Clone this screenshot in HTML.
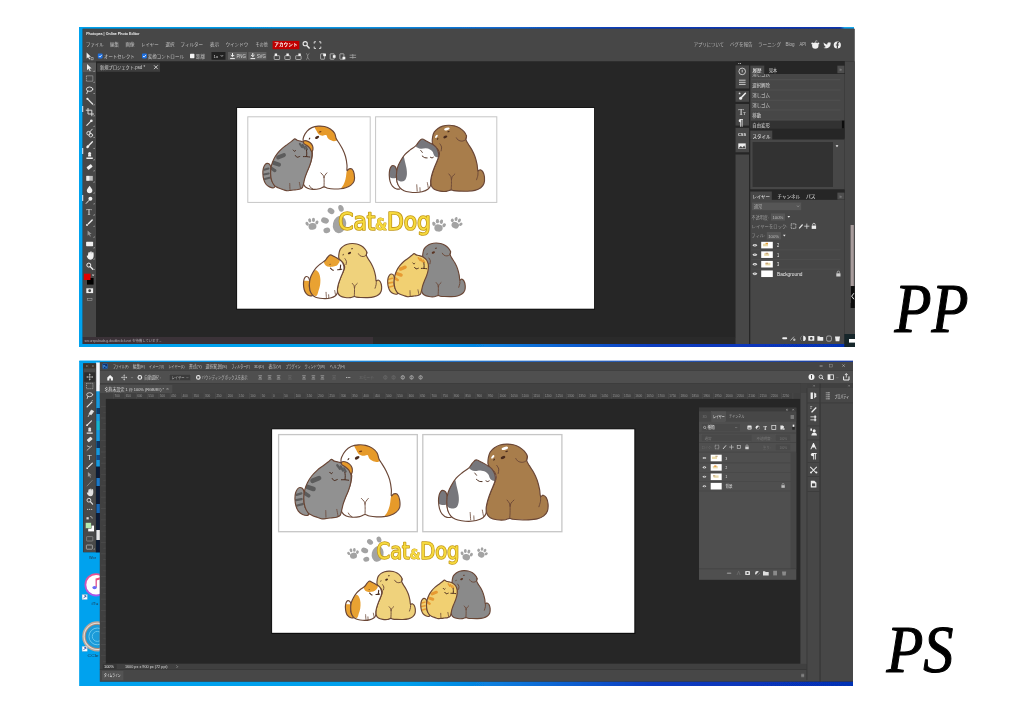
<!DOCTYPE html>
<html lang="ja"><head><meta charset="utf-8"><title>PP / PS</title>
<style>html,body{margin:0;padding:0;background:#fff;width:1024px;height:709px;overflow:hidden}svg{display:block}text{white-space:pre}</style>
</head><body>
<svg width="1024" height="709" viewBox="0 0 1024 709" font-family="'Liberation Sans','Noto Sans CJK JP',sans-serif">
<defs>
<g id="pairA"><clipPath id="adb"><path d="M47.09 11.11C48.47 9.56 50 8.45 51.85 7.62C53.7 6.79 56.08 6.31 58.2 6.14C60.32 5.96 62.52 6.08 64.55 6.56C66.58 7.04 68.69 7.88 70.37 8.99C72.05 10.11 73.63 11.64 74.6 13.23C75.57 14.81 75.49 16.93 76.19 18.52C76.9 20.11 77.78 20.99 78.84 22.75C79.89 24.51 81.43 26.81 82.54 29.1C83.65 31.39 84.76 33.86 85.5 36.51C86.24 39.15 86.74 42.63 86.98 44.97C87.23 47.32 86.63 49.93 86.98 50.58C87.34 51.23 88.25 49.12 89.1 48.89C89.95 48.66 91.22 48.36 92.06 49.21C92.91 50.05 93.83 52.03 94.18 53.97C94.53 55.91 94.71 58.99 94.18 60.85C93.65 62.7 92.42 63.93 91.01 65.08C89.59 66.23 87.48 67.11 85.71 67.72C83.95 68.34 82.36 68.57 80.42 68.78C78.48 68.99 76.19 69.08 74.07 68.99C71.96 68.91 69.4 68.61 67.72 68.25C66.05 67.9 65.43 66.79 64.02 66.88C62.61 66.97 61.11 68.38 59.26 68.78C57.41 69.19 54.85 69.4 52.91 69.31C50.97 69.22 49.12 68.96 47.62 68.25C46.12 67.55 44.62 66.23 43.92 65.08C43.21 63.93 43.12 63.05 43.39 61.38C43.65 59.7 44.62 57.32 45.5 55.03C46.38 52.73 47.71 50.09 48.68 47.62C49.65 45.15 50.71 42.68 51.32 40.21C51.94 37.74 52.65 35.1 52.38 32.8C52.12 30.51 50.97 28.13 49.74 26.46C48.5 24.78 46.07 23.63 44.97 22.75C43.88 21.87 43.4 22.13 43.17 21.16C42.95 20.19 42.95 18.61 43.6 16.93C44.25 15.26 45.71 12.66 47.09 11.11Z"/></clipPath><path d="M47.09 11.11C48.47 9.56 50 8.45 51.85 7.62C53.7 6.79 56.08 6.31 58.2 6.14C60.32 5.96 62.52 6.08 64.55 6.56C66.58 7.04 68.69 7.88 70.37 8.99C72.05 10.11 73.63 11.64 74.6 13.23C75.57 14.81 75.49 16.93 76.19 18.52C76.9 20.11 77.78 20.99 78.84 22.75C79.89 24.51 81.43 26.81 82.54 29.1C83.65 31.39 84.76 33.86 85.5 36.51C86.24 39.15 86.74 42.63 86.98 44.97C87.23 47.32 86.63 49.93 86.98 50.58C87.34 51.23 88.25 49.12 89.1 48.89C89.95 48.66 91.22 48.36 92.06 49.21C92.91 50.05 93.83 52.03 94.18 53.97C94.53 55.91 94.71 58.99 94.18 60.85C93.65 62.7 92.42 63.93 91.01 65.08C89.59 66.23 87.48 67.11 85.71 67.72C83.95 68.34 82.36 68.57 80.42 68.78C78.48 68.99 76.19 69.08 74.07 68.99C71.96 68.91 69.4 68.61 67.72 68.25C66.05 67.9 65.43 66.79 64.02 66.88C62.61 66.97 61.11 68.38 59.26 68.78C57.41 69.19 54.85 69.4 52.91 69.31C50.97 69.22 49.12 68.96 47.62 68.25C46.12 67.55 44.62 66.23 43.92 65.08C43.21 63.93 43.12 63.05 43.39 61.38C43.65 59.7 44.62 57.32 45.5 55.03C46.38 52.73 47.71 50.09 48.68 47.62C49.65 45.15 50.71 42.68 51.32 40.21C51.94 37.74 52.65 35.1 52.38 32.8C52.12 30.51 50.97 28.13 49.74 26.46C48.5 24.78 46.07 23.63 44.97 22.75C43.88 21.87 43.4 22.13 43.17 21.16C42.95 20.19 42.95 18.61 43.6 16.93C44.25 15.26 45.71 12.66 47.09 11.11Z" fill="#fff"/><g clip-path="url(#adb)"><path d="M54.5 5.82C55.2 4.76 58.64 4.76 60.85 4.76C63.05 4.76 65.52 5.03 67.72 5.82C69.93 6.61 72.49 8.02 74.07 9.52C75.66 11.02 76.63 13.14 77.25 14.81C77.87 16.49 78.31 18.52 77.78 19.58C77.25 20.63 75.31 21.08 74.07 21.16C72.84 21.25 71.43 20.63 70.37 20.11C69.31 19.58 68.43 18.84 67.72 17.99C67.02 17.14 67.02 15.41 66.14 15.03C65.26 14.64 63.67 15.78 62.43 15.66C61.2 15.54 59.7 15.04 58.73 14.29C57.76 13.53 57.32 12.52 56.61 11.11C55.91 9.7 53.79 6.88 54.5 5.82Z" fill="#e69a2c"/><path d="M86.98 50.58C87.46 49.65 88.25 49.12 89.1 48.89C89.95 48.66 91.22 48.36 92.06 49.21C92.91 50.05 93.83 52.03 94.18 53.97C94.53 55.91 94.71 58.99 94.18 60.85C93.65 62.7 92.42 63.93 91.01 65.08C89.59 66.23 87.39 67.07 85.71 67.72C84.04 68.38 81.31 69.52 80.95 68.99C80.6 68.47 82.84 66.17 83.6 64.55C84.36 62.93 85.06 60.93 85.5 59.26C85.94 57.58 86 55.94 86.24 54.5C86.49 53.05 86.51 51.52 86.98 50.58Z" fill="#e69a2c"/></g><path d="M47.09 11.11C48.47 9.56 50 8.45 51.85 7.62C53.7 6.79 56.08 6.31 58.2 6.14C60.32 5.96 62.52 6.08 64.55 6.56C66.58 7.04 68.69 7.88 70.37 8.99C72.05 10.11 73.63 11.64 74.6 13.23C75.57 14.81 75.49 16.93 76.19 18.52C76.9 20.11 77.78 20.99 78.84 22.75C79.89 24.51 81.43 26.81 82.54 29.1C83.65 31.39 84.76 33.86 85.5 36.51C86.24 39.15 86.74 42.63 86.98 44.97C87.23 47.32 86.63 49.93 86.98 50.58C87.34 51.23 88.25 49.12 89.1 48.89C89.95 48.66 91.22 48.36 92.06 49.21C92.91 50.05 93.83 52.03 94.18 53.97C94.53 55.91 94.71 58.99 94.18 60.85C93.65 62.7 92.42 63.93 91.01 65.08C89.59 66.23 87.48 67.11 85.71 67.72C83.95 68.34 82.36 68.57 80.42 68.78C78.48 68.99 76.19 69.08 74.07 68.99C71.96 68.91 69.4 68.61 67.72 68.25C66.05 67.9 65.43 66.79 64.02 66.88C62.61 66.97 61.11 68.38 59.26 68.78C57.41 69.19 54.85 69.4 52.91 69.31C50.97 69.22 49.12 68.96 47.62 68.25C46.12 67.55 44.62 66.23 43.92 65.08C43.21 63.93 43.12 63.05 43.39 61.38C43.65 59.7 44.62 57.32 45.5 55.03C46.38 52.73 47.71 50.09 48.68 47.62C49.65 45.15 50.71 42.68 51.32 40.21C51.94 37.74 52.65 35.1 52.38 32.8C52.12 30.51 50.97 28.13 49.74 26.46C48.5 24.78 46.07 23.63 44.97 22.75C43.88 21.87 43.4 22.13 43.17 21.16C42.95 20.19 42.95 18.61 43.6 16.93C44.25 15.26 45.71 12.66 47.09 11.11Z" fill="none" stroke="#6a4636" stroke-width="1.15" stroke-linejoin="round" vector-effect="non-scaling-stroke"/><path d="M60.85 52.91C61.25 53.35 62.75 54.71 63.28 55.56C63.81 56.4 63.77 57.99 64.02 57.99C64.27 57.99 64.29 56.4 64.76 55.56C65.24 54.71 66.53 53.35 66.88 52.91" fill="none" stroke="#6a4636" stroke-width="0.9" stroke-linecap="round" stroke-linejoin="round" vector-effect="non-scaling-stroke"/><path d="M64.02 57.99C64.04 58.73 64.13 60.99 64.13 62.43C64.13 63.88 64.04 65.96 64.02 66.67" fill="none" stroke="#6a4636" stroke-width="0.9" stroke-linecap="round" stroke-linejoin="round" vector-effect="non-scaling-stroke"/><path d="M49.52 65.61C49.74 65.96 50.26 67.2 50.79 67.72C51.32 68.25 52.38 68.61 52.7 68.78" fill="none" stroke="#6a4636" stroke-width="0.9" stroke-linecap="round" stroke-linejoin="round" vector-effect="non-scaling-stroke"/><ellipse cx="57.14" cy="17.46" rx="2.22" ry="1.27" transform="rotate(-30 57.14 17.46)" fill="#4a2c1e"/><ellipse cx="49.52" cy="18.62" rx="1.16" ry="0.53" transform="rotate(-55 49.52 18.62)" fill="#4a2c1e"/><ellipse cx="60.11" cy="11.85" rx="1.48" ry="0.63" transform="rotate(-15 60.11 11.85)" fill="#7a3e14"/><g><clipPath id="act"><path d="M7.41 43.39C8.24 43.44 9.44 43.92 10.05 44.97C10.67 46.03 11.02 48.06 11.11 49.74C11.2 51.41 10.49 53.26 10.58 55.03C10.67 56.79 10.93 58.55 11.64 60.32C12.35 62.08 14.46 64.37 14.81 65.61C15.17 66.84 14.64 67.51 13.76 67.72C12.87 67.94 10.85 67.5 9.52 66.88C8.2 66.26 6.79 65.29 5.82 64.02C4.85 62.75 4.2 61.02 3.7 59.26C3.21 57.5 2.91 55.29 2.86 53.44C2.8 51.59 3.02 49.61 3.39 48.15C3.76 46.68 4.41 45.45 5.08 44.66C5.75 43.86 6.58 43.33 7.41 43.39Z"/></clipPath><clipPath id="acb"><path d="M34.71 18.84C35.63 18.69 36.24 19.93 37.25 20.32C38.25 20.71 39.37 20.76 40.74 21.16C42.12 21.57 44 21.87 45.5 22.75C47 23.63 48.68 24.87 49.74 26.46C50.79 28.04 51.55 30.16 51.85 32.28C52.15 34.39 51.89 36.95 51.53 39.15C51.18 41.36 50.48 43.39 49.74 45.5C48.99 47.62 47.88 49.82 47.09 51.85C46.3 53.88 45.56 55.73 44.97 57.67C44.39 59.61 44.04 61.82 43.6 63.49C43.16 65.17 43.07 66.75 42.33 67.72C41.59 68.69 40.39 68.96 39.15 69.31C37.92 69.66 36.33 69.66 34.92 69.84C33.51 70.02 32.1 70.23 30.69 70.37C29.28 70.51 27.87 70.86 26.46 70.69C25.04 70.51 23.63 69.81 22.22 69.31C20.81 68.82 19.31 68.38 17.99 67.72C16.67 67.07 15.34 66.63 14.29 65.4C13.23 64.16 12.26 62.4 11.64 60.32C11.02 58.24 10.62 55.38 10.58 52.91C10.55 50.44 10.9 47.8 11.43 45.5C11.96 43.21 12.75 41.18 13.76 39.15C14.76 37.13 16.05 35.13 17.46 33.33C18.87 31.53 20.55 29.86 22.22 28.36C23.9 26.86 25.93 25.54 27.51 24.34C29.1 23.14 30.55 22.08 31.75 21.16C32.95 20.25 33.79 18.98 34.71 18.84Z"/></clipPath><path d="M7.41 43.39C8.24 43.44 9.44 43.92 10.05 44.97C10.67 46.03 11.02 48.06 11.11 49.74C11.2 51.41 10.49 53.26 10.58 55.03C10.67 56.79 10.93 58.55 11.64 60.32C12.35 62.08 14.46 64.37 14.81 65.61C15.17 66.84 14.64 67.51 13.76 67.72C12.87 67.94 10.85 67.5 9.52 66.88C8.2 66.26 6.79 65.29 5.82 64.02C4.85 62.75 4.2 61.02 3.7 59.26C3.21 57.5 2.91 55.29 2.86 53.44C2.8 51.59 3.02 49.61 3.39 48.15C3.76 46.68 4.41 45.45 5.08 44.66C5.75 43.86 6.58 43.33 7.41 43.39Z" fill="#919191"/><g clip-path="url(#act)"><path d="M4.23 49.74L8.47 48.47" stroke="#5c5c5c" stroke-width="2.01" stroke-linecap="round" fill="none"/><path d="M3.81 54.39L8.68 53.44" stroke="#5c5c5c" stroke-width="2.01" stroke-linecap="round" fill="none"/><path d="M4.87 59.05L9.52 57.78" stroke="#5c5c5c" stroke-width="2.01" stroke-linecap="round" fill="none"/></g><path d="M7.41 43.39C8.24 43.44 9.44 43.92 10.05 44.97C10.67 46.03 11.02 48.06 11.11 49.74C11.2 51.41 10.49 53.26 10.58 55.03C10.67 56.79 10.93 58.55 11.64 60.32C12.35 62.08 14.46 64.37 14.81 65.61C15.17 66.84 14.64 67.51 13.76 67.72C12.87 67.94 10.85 67.5 9.52 66.88C8.2 66.26 6.79 65.29 5.82 64.02C4.85 62.75 4.2 61.02 3.7 59.26C3.21 57.5 2.91 55.29 2.86 53.44C2.8 51.59 3.02 49.61 3.39 48.15C3.76 46.68 4.41 45.45 5.08 44.66C5.75 43.86 6.58 43.33 7.41 43.39Z" fill="none" stroke="#6a4636" stroke-width="1.15" vector-effect="non-scaling-stroke"/><path d="M34.71 18.84C35.63 18.69 36.24 19.93 37.25 20.32C38.25 20.71 39.37 20.76 40.74 21.16C42.12 21.57 44 21.87 45.5 22.75C47 23.63 48.68 24.87 49.74 26.46C50.79 28.04 51.55 30.16 51.85 32.28C52.15 34.39 51.89 36.95 51.53 39.15C51.18 41.36 50.48 43.39 49.74 45.5C48.99 47.62 47.88 49.82 47.09 51.85C46.3 53.88 45.56 55.73 44.97 57.67C44.39 59.61 44.04 61.82 43.6 63.49C43.16 65.17 43.07 66.75 42.33 67.72C41.59 68.69 40.39 68.96 39.15 69.31C37.92 69.66 36.33 69.66 34.92 69.84C33.51 70.02 32.1 70.23 30.69 70.37C29.28 70.51 27.87 70.86 26.46 70.69C25.04 70.51 23.63 69.81 22.22 69.31C20.81 68.82 19.31 68.38 17.99 67.72C16.67 67.07 15.34 66.63 14.29 65.4C13.23 64.16 12.26 62.4 11.64 60.32C11.02 58.24 10.62 55.38 10.58 52.91C10.55 50.44 10.9 47.8 11.43 45.5C11.96 43.21 12.75 41.18 13.76 39.15C14.76 37.13 16.05 35.13 17.46 33.33C18.87 31.53 20.55 29.86 22.22 28.36C23.9 26.86 25.93 25.54 27.51 24.34C29.1 23.14 30.55 22.08 31.75 21.16C32.95 20.25 33.79 18.98 34.71 18.84Z" fill="#919191"/><g clip-path="url(#acb)"><path d="M18.2 37.46L23.92 35.13" stroke="#5c5c5c" stroke-width="4.02" stroke-linecap="round" fill="none"/><path d="M13.54 42.75L19.05 44.66" stroke="#5c5c5c" stroke-width="4.02" stroke-linecap="round" fill="none"/><path d="M11.01 48.04L14.81 50.58" stroke="#5c5c5c" stroke-width="3.17" stroke-linecap="round" fill="none"/><path d="M39.79 23.92L42.12 27.09" stroke="#5c5c5c" stroke-width="2.01" stroke-linecap="round" fill="none"/><path d="M42.75 24.97L44.87 28.57" stroke="#5c5c5c" stroke-width="2.01" stroke-linecap="round" fill="none"/><path d="M45.71 26.46L47.2 29.42" stroke="#5c5c5c" stroke-width="1.69" stroke-linecap="round" fill="none"/></g><path d="M34.71 18.84C35.63 18.69 36.24 19.93 37.25 20.32C38.25 20.71 39.37 20.76 40.74 21.16C42.12 21.57 44 21.87 45.5 22.75C47 23.63 48.68 24.87 49.74 26.46C50.79 28.04 51.55 30.16 51.85 32.28C52.15 34.39 51.89 36.95 51.53 39.15C51.18 41.36 50.48 43.39 49.74 45.5C48.99 47.62 47.88 49.82 47.09 51.85C46.3 53.88 45.56 55.73 44.97 57.67C44.39 59.61 44.04 61.82 43.6 63.49C43.16 65.17 43.07 66.75 42.33 67.72C41.59 68.69 40.39 68.96 39.15 69.31C37.92 69.66 36.33 69.66 34.92 69.84C33.51 70.02 32.1 70.23 30.69 70.37C29.28 70.51 27.87 70.86 26.46 70.69C25.04 70.51 23.63 69.81 22.22 69.31C20.81 68.82 19.31 68.38 17.99 67.72C16.67 67.07 15.34 66.63 14.29 65.4C13.23 64.16 12.26 62.4 11.64 60.32C11.02 58.24 10.62 55.38 10.58 52.91C10.55 50.44 10.9 47.8 11.43 45.5C11.96 43.21 12.75 41.18 13.76 39.15C14.76 37.13 16.05 35.13 17.46 33.33C18.87 31.53 20.55 29.86 22.22 28.36C23.9 26.86 25.93 25.54 27.51 24.34C29.1 23.14 30.55 22.08 31.75 21.16C32.95 20.25 33.79 18.98 34.71 18.84Z" fill="none" stroke="#6a4636" stroke-width="1.15" stroke-linejoin="round" vector-effect="non-scaling-stroke"/><path d="M33.23 30.05C33.44 30.26 34.11 31.25 34.5 31.32C34.89 31.39 35.38 30.62 35.56 30.48" fill="none" stroke="#4a2c1e" stroke-width="1" stroke-linecap="round" stroke-linejoin="round" vector-effect="non-scaling-stroke"/><path d="M35.34 35.34C35.63 35.66 36.3 37.07 37.04 37.25C37.78 37.43 39.33 36.54 39.79 36.4" fill="none" stroke="#4a2c1e" stroke-width="1" stroke-linecap="round" stroke-linejoin="round" vector-effect="non-scaling-stroke"/><path d="M46.35 29.84C46.42 30.37 46.74 31.92 46.77 33.02C46.81 34.11 46.6 35.84 46.56 36.4" fill="none" stroke="#4a2c1e" stroke-width="1" stroke-linecap="round" stroke-linejoin="round" vector-effect="non-scaling-stroke"/><path d="M43.39 36.61C43.92 36.61 45.5 36.54 46.56 36.61C47.62 36.68 49.21 36.97 49.74 37.04" fill="none" stroke="#4a2c1e" stroke-width="1" stroke-linecap="round" stroke-linejoin="round" vector-effect="non-scaling-stroke"/><path d="M29.74 63.49C29.77 64.46 29.91 68.34 29.95 69.31" fill="none" stroke="#6a4636" stroke-width="0.8" stroke-linecap="round" stroke-linejoin="round" vector-effect="non-scaling-stroke"/><path d="M39.37 62.43C39.54 63.35 40.25 67.02 40.42 67.94" fill="none" stroke="#6a4636" stroke-width="0.8" stroke-linecap="round" stroke-linejoin="round" vector-effect="non-scaling-stroke"/></g><path d="M43.6 21.16C44.04 20.72 45.45 20.58 46.56 20.85C47.67 21.11 49.26 21.9 50.26 22.75C51.27 23.6 52.15 24.78 52.59 25.93C53.03 27.07 53.07 28.69 52.91 29.63C52.75 30.56 52.17 31.8 51.64 31.53C51.11 31.27 50.58 29.1 49.74 28.04C48.89 26.98 47.53 25.94 46.56 25.19C45.59 24.43 44.41 24.16 43.92 23.49C43.42 22.82 43.16 21.6 43.6 21.16Z" fill="#e69a2c" stroke="#6a4636" stroke-width="1.15" stroke-linejoin="round" vector-effect="non-scaling-stroke"/></g>
<g id="pairB"><path d="M47.62 16.93C47.94 15.17 48.32 13.58 49.21 12.17C50.09 10.76 51.5 9.47 52.91 8.47C54.32 7.46 55.91 6.67 57.67 6.14C59.44 5.61 61.55 5.34 63.49 5.29C65.43 5.24 67.46 5.38 69.31 5.82C71.16 6.26 73.02 7 74.6 7.94C76.19 8.87 77.69 10.11 78.84 11.43C79.98 12.75 81.13 14.51 81.48 15.87C81.83 17.23 80.69 18.25 80.95 19.58C81.22 20.9 82.1 22.13 83.07 23.81C84.04 25.49 85.63 27.51 86.77 29.63C87.92 31.75 89.07 34.04 89.95 36.51C90.83 38.98 91.57 42.1 92.06 44.44C92.56 46.79 92.38 49.7 92.91 50.58C93.44 51.46 94.41 49.52 95.24 49.74C96.07 49.95 97.18 50.62 97.88 51.85C98.59 53.09 99.29 55.2 99.47 57.14C99.65 59.08 99.56 61.73 98.94 63.49C98.32 65.26 97.27 66.58 95.77 67.72C94.27 68.87 92.15 69.79 89.95 70.37C87.74 70.95 85.19 71.09 82.54 71.22C79.89 71.34 76.37 71.2 74.07 71.11C71.78 71.02 70.11 70.9 68.78 70.69C67.46 70.48 67.37 69.74 66.14 69.84C64.9 69.95 63.23 71.11 61.38 71.32C59.52 71.53 57.05 71.45 55.03 71.11C53 70.78 50.67 70.23 49.21 69.31C47.74 68.4 46.83 67.11 46.24 65.61C45.66 64.11 45.57 62.26 45.71 60.32C45.86 58.38 46.42 56.26 47.09 53.97C47.76 51.68 48.77 49.03 49.74 46.56C50.71 44.09 52.12 41.27 52.91 39.15C53.7 37.04 54.5 35.45 54.5 33.86C54.5 32.28 53.79 30.95 52.91 29.63C52.03 28.31 50.14 27.07 49.21 25.93C48.27 24.78 47.57 24.25 47.3 22.75C47.04 21.25 47.3 18.69 47.62 16.93Z" fill="#a87d4c" stroke="#6a4636" stroke-width="1.15" stroke-linejoin="round" vector-effect="non-scaling-stroke"/><path d="M81.48 15.87C81.34 16.49 81.38 18.69 80.63 19.58C79.89 20.46 78.27 21.08 77.04 21.16C75.8 21.25 74.16 20.67 73.23 20.11C72.29 19.54 71.73 18.17 71.43 17.78" fill="none" stroke="#6a4636" stroke-width="0.9" stroke-linecap="round" stroke-linejoin="round" vector-effect="non-scaling-stroke"/><path d="M54.81 23.81C55.11 24.34 56.4 25.8 56.61 26.98C56.83 28.17 56.17 30.25 56.08 30.9" fill="none" stroke="#6a4636" stroke-width="0.9" stroke-linecap="round" stroke-linejoin="round" vector-effect="non-scaling-stroke"/><path d="M92.91 50.58C92.91 51.32 93.14 53.49 92.91 55.03C92.68 56.56 91.76 58.99 91.53 59.79" fill="none" stroke="#6a4636" stroke-width="0.9" stroke-linecap="round" stroke-linejoin="round" vector-effect="non-scaling-stroke"/><path d="M63.81 53.97C64.14 54.41 65.38 55.7 65.82 56.61C66.26 57.53 66.21 59.47 66.46 59.47C66.7 59.47 66.74 57.53 67.3 56.61C67.87 55.7 69.42 54.41 69.84 53.97" fill="none" stroke="#6a4636" stroke-width="0.9" stroke-linecap="round" stroke-linejoin="round" vector-effect="non-scaling-stroke"/><path d="M66.46 59.47C66.46 60.32 66.51 62.79 66.46 64.55C66.4 66.31 66.19 69.14 66.14 70.05" fill="none" stroke="#6a4636" stroke-width="0.9" stroke-linecap="round" stroke-linejoin="round" vector-effect="non-scaling-stroke"/><ellipse cx="61.9" cy="8.99" rx="2.86" ry="1.27" transform="rotate(-15 61.9 8.99)" fill="#fff"/><ellipse cx="51.43" cy="16.4" rx="1.8" ry="0.95" transform="rotate(-50 51.43 16.4)" fill="#fff"/><ellipse cx="60.32" cy="16.93" rx="2.12" ry="1.27" transform="rotate(-25 60.32 16.93)" fill="#4a2c1e"/><ellipse cx="63.49" cy="11.64" rx="1.27" ry="0.63" transform="rotate(-15 63.49 11.64)" fill="#4a2c1e"/><ellipse cx="52.59" cy="18.84" rx="1.06" ry="0.53" transform="rotate(-55 52.59 18.84)" fill="#4a2c1e"/><clipPath id="bct"><path d="M7.94 45.5C8.68 45.59 9.93 46.03 10.58 47.09C11.23 48.15 11.71 50.18 11.85 51.85C11.99 53.53 11.29 55.2 11.43 57.14C11.57 59.08 11.96 61.64 12.7 63.49C13.44 65.34 16.05 67.34 15.87 68.25C15.7 69.17 13.05 69.35 11.64 68.99C10.23 68.64 8.5 67.41 7.41 66.14C6.31 64.87 5.61 63.23 5.08 61.38C4.55 59.52 4.29 56.97 4.23 55.03C4.18 53.09 4.44 51.15 4.76 49.74C5.08 48.32 5.61 47.27 6.14 46.56C6.67 45.86 7.2 45.41 7.94 45.5Z"/></clipPath><clipPath id="bcb"><path d="M37.04 19.05C38.36 18.96 40.21 20.37 41.8 21.16C43.39 21.96 45.06 22.84 46.56 23.81C48.06 24.78 49.68 25.66 50.79 26.98C51.9 28.31 52.75 30.25 53.23 31.75C53.7 33.25 53.79 34.57 53.65 35.98C53.51 37.39 53.03 38.45 52.38 40.21C51.73 41.98 50.62 44.27 49.74 46.56C48.85 48.85 47.76 51.68 47.09 53.97C46.42 56.26 45.98 58.38 45.71 60.32C45.45 62.26 45.98 64.11 45.5 65.61C45.03 67.11 44.27 68.29 42.86 69.31C41.45 70.34 39.07 71.22 37.04 71.75C35.01 72.28 32.8 72.45 30.69 72.49C28.57 72.52 26.28 72.26 24.34 71.96C22.4 71.66 20.63 71.39 19.05 70.69C17.46 69.98 15.96 69.1 14.81 67.72C13.67 66.35 12.73 64.55 12.17 62.43C11.6 60.32 11.38 57.5 11.43 55.03C11.48 52.56 11.83 49.91 12.49 47.62C13.14 45.33 14.16 43.39 15.34 41.27C16.53 39.15 17.99 36.77 19.58 34.92C21.16 33.07 23.02 31.66 24.87 30.16C26.72 28.66 29.19 27.34 30.69 25.93C32.19 24.51 32.8 22.84 33.86 21.69C34.92 20.55 35.71 19.14 37.04 19.05Z"/></clipPath><path d="M7.94 45.5C8.68 45.59 9.93 46.03 10.58 47.09C11.23 48.15 11.71 50.18 11.85 51.85C11.99 53.53 11.29 55.2 11.43 57.14C11.57 59.08 11.96 61.64 12.7 63.49C13.44 65.34 16.05 67.34 15.87 68.25C15.7 69.17 13.05 69.35 11.64 68.99C10.23 68.64 8.5 67.41 7.41 66.14C6.31 64.87 5.61 63.23 5.08 61.38C4.55 59.52 4.29 56.97 4.23 55.03C4.18 53.09 4.44 51.15 4.76 49.74C5.08 48.32 5.61 47.27 6.14 46.56C6.67 45.86 7.2 45.41 7.94 45.5Z" fill="#fff"/><g clip-path="url(#bct)"><path d="M2.12 42.33C4.06 40.21 11.82 40.21 13.76 42.33C15.7 44.44 14.29 52.42 13.76 55.03C13.23 57.64 11.82 57.5 10.58 57.99C9.35 58.48 7.76 58.48 6.35 57.99C4.94 57.5 2.82 57.64 2.12 55.03C1.41 52.42 0.18 44.44 2.12 42.33Z" fill="#77777b"/></g><path d="M7.94 45.5C8.68 45.59 9.93 46.03 10.58 47.09C11.23 48.15 11.71 50.18 11.85 51.85C11.99 53.53 11.29 55.2 11.43 57.14C11.57 59.08 11.96 61.64 12.7 63.49C13.44 65.34 16.05 67.34 15.87 68.25C15.7 69.17 13.05 69.35 11.64 68.99C10.23 68.64 8.5 67.41 7.41 66.14C6.31 64.87 5.61 63.23 5.08 61.38C4.55 59.52 4.29 56.97 4.23 55.03C4.18 53.09 4.44 51.15 4.76 49.74C5.08 48.32 5.61 47.27 6.14 46.56C6.67 45.86 7.2 45.41 7.94 45.5Z" fill="none" stroke="#6a4636" stroke-width="1.15" vector-effect="non-scaling-stroke"/><path d="M37.04 19.05C38.36 18.96 40.21 20.37 41.8 21.16C43.39 21.96 45.06 22.84 46.56 23.81C48.06 24.78 49.68 25.66 50.79 26.98C51.9 28.31 52.75 30.25 53.23 31.75C53.7 33.25 53.79 34.57 53.65 35.98C53.51 37.39 53.03 38.45 52.38 40.21C51.73 41.98 50.62 44.27 49.74 46.56C48.85 48.85 47.76 51.68 47.09 53.97C46.42 56.26 45.98 58.38 45.71 60.32C45.45 62.26 45.98 64.11 45.5 65.61C45.03 67.11 44.27 68.29 42.86 69.31C41.45 70.34 39.07 71.22 37.04 71.75C35.01 72.28 32.8 72.45 30.69 72.49C28.57 72.52 26.28 72.26 24.34 71.96C22.4 71.66 20.63 71.39 19.05 70.69C17.46 69.98 15.96 69.1 14.81 67.72C13.67 66.35 12.73 64.55 12.17 62.43C11.6 60.32 11.38 57.5 11.43 55.03C11.48 52.56 11.83 49.91 12.49 47.62C13.14 45.33 14.16 43.39 15.34 41.27C16.53 39.15 17.99 36.77 19.58 34.92C21.16 33.07 23.02 31.66 24.87 30.16C26.72 28.66 29.19 27.34 30.69 25.93C32.19 24.51 32.8 22.84 33.86 21.69C34.92 20.55 35.71 19.14 37.04 19.05Z" fill="#fff"/><g clip-path="url(#bcb)"><path d="M31.22 25.93C31.83 24.34 34.74 19.17 36.51 18.2C38.27 17.23 40.04 19.35 41.8 20.11C43.56 20.86 45.41 21.69 47.09 22.75C48.77 23.81 50.62 24.96 51.85 26.46C53.09 27.95 54.06 30.07 54.5 31.75C54.94 33.42 54.94 35.59 54.5 36.51C54.06 37.43 52.73 37.43 51.85 37.25C50.97 37.07 49.91 36.37 49.21 35.45C48.5 34.53 48.32 32.75 47.62 31.75C46.91 30.74 46.12 29.98 44.97 29.42C43.83 28.85 42.24 28.47 40.74 28.36C39.24 28.25 37.3 28.89 35.98 28.78C34.66 28.68 33.6 28.2 32.8 27.72C32.01 27.25 30.6 27.51 31.22 25.93Z" fill="#77777b"/><path d="M15.87 40.21C16.93 38.8 17.81 36.16 18.52 36.51C19.22 36.86 19.58 40.12 20.11 42.33C20.63 44.53 21.43 47.44 21.69 49.74C21.96 52.03 22.05 54.29 21.69 56.08C21.34 57.88 20.72 59.68 19.58 60.53C18.43 61.38 16.31 61.64 14.81 61.16C13.32 60.69 11.38 59.4 10.58 57.67C9.79 55.94 9.79 52.91 10.05 50.79C10.32 48.68 11.2 46.74 12.17 44.97C13.14 43.21 14.81 41.62 15.87 40.21Z" fill="#77777b"/></g><path d="M37.04 19.05C38.36 18.96 40.21 20.37 41.8 21.16C43.39 21.96 45.06 22.84 46.56 23.81C48.06 24.78 49.68 25.66 50.79 26.98C51.9 28.31 52.75 30.25 53.23 31.75C53.7 33.25 53.79 34.57 53.65 35.98C53.51 37.39 53.03 38.45 52.38 40.21C51.73 41.98 50.62 44.27 49.74 46.56C48.85 48.85 47.76 51.68 47.09 53.97C46.42 56.26 45.98 58.38 45.71 60.32C45.45 62.26 45.98 64.11 45.5 65.61C45.03 67.11 44.27 68.29 42.86 69.31C41.45 70.34 39.07 71.22 37.04 71.75C35.01 72.28 32.8 72.45 30.69 72.49C28.57 72.52 26.28 72.26 24.34 71.96C22.4 71.66 20.63 71.39 19.05 70.69C17.46 69.98 15.96 69.1 14.81 67.72C13.67 66.35 12.73 64.55 12.17 62.43C11.6 60.32 11.38 57.5 11.43 55.03C11.48 52.56 11.83 49.91 12.49 47.62C13.14 45.33 14.16 43.39 15.34 41.27C16.53 39.15 17.99 36.77 19.58 34.92C21.16 33.07 23.02 31.66 24.87 30.16C26.72 28.66 29.19 27.34 30.69 25.93C32.19 24.51 32.8 22.84 33.86 21.69C34.92 20.55 35.71 19.14 37.04 19.05Z" fill="none" stroke="#6a4636" stroke-width="1.15" stroke-linejoin="round" vector-effect="non-scaling-stroke"/><path d="M31.75 64.76C31.82 65.82 32.1 70.05 32.17 71.11" fill="none" stroke="#6a4636" stroke-width="0.8" stroke-linecap="round" stroke-linejoin="round" vector-effect="non-scaling-stroke"/><path d="M42.33 62.65C42.5 63.58 43.21 67.32 43.39 68.25" fill="none" stroke="#6a4636" stroke-width="0.8" stroke-linecap="round" stroke-linejoin="round" vector-effect="non-scaling-stroke"/><path d="M34.92 67.72C34.96 68.36 35.1 70.9 35.13 71.53" fill="none" stroke="#6a4636" stroke-width="0.8" stroke-linecap="round" stroke-linejoin="round" vector-effect="non-scaling-stroke"/><path d="M35.77 30.48C35.91 30.65 36.37 31.22 36.61 31.53C36.86 31.85 37.14 32.24 37.25 32.38" fill="none" stroke="#4a2c1e" stroke-width="1" stroke-linecap="round" stroke-linejoin="round" vector-effect="non-scaling-stroke"/><path d="M37.25 35.98C37.65 36.26 38.87 37.35 39.68 37.67C40.49 37.99 41.71 37.85 42.12 37.88" fill="none" stroke="#4a2c1e" stroke-width="1" stroke-linecap="round" stroke-linejoin="round" vector-effect="non-scaling-stroke"/><path d="M45.5 37.25C45.75 37.35 46.53 37.88 46.98 37.88C47.44 37.88 48.04 37.35 48.25 37.25" fill="none" stroke="#4a2c1e" stroke-width="1" stroke-linecap="round" stroke-linejoin="round" vector-effect="non-scaling-stroke"/></g>
<g id="pairC"><path d="M47.62 16.93C47.94 15.17 48.32 13.58 49.21 12.17C50.09 10.76 51.5 9.47 52.91 8.47C54.32 7.46 55.91 6.67 57.67 6.14C59.44 5.61 61.55 5.34 63.49 5.29C65.43 5.24 67.46 5.38 69.31 5.82C71.16 6.26 73.02 7 74.6 7.94C76.19 8.87 77.69 10.11 78.84 11.43C79.98 12.75 81.13 14.51 81.48 15.87C81.83 17.23 80.69 18.25 80.95 19.58C81.22 20.9 82.1 22.13 83.07 23.81C84.04 25.49 85.63 27.51 86.77 29.63C87.92 31.75 89.07 34.04 89.95 36.51C90.83 38.98 91.57 42.1 92.06 44.44C92.56 46.79 92.38 49.7 92.91 50.58C93.44 51.46 94.41 49.52 95.24 49.74C96.07 49.95 97.18 50.62 97.88 51.85C98.59 53.09 99.29 55.2 99.47 57.14C99.65 59.08 99.56 61.73 98.94 63.49C98.32 65.26 97.27 66.58 95.77 67.72C94.27 68.87 92.15 69.79 89.95 70.37C87.74 70.95 85.19 71.09 82.54 71.22C79.89 71.34 76.37 71.2 74.07 71.11C71.78 71.02 70.11 70.9 68.78 70.69C67.46 70.48 67.37 69.74 66.14 69.84C64.9 69.95 63.23 71.11 61.38 71.32C59.52 71.53 57.05 71.45 55.03 71.11C53 70.78 50.67 70.23 49.21 69.31C47.74 68.4 46.83 67.11 46.24 65.61C45.66 64.11 45.57 62.26 45.71 60.32C45.86 58.38 46.42 56.26 47.09 53.97C47.76 51.68 48.77 49.03 49.74 46.56C50.71 44.09 52.12 41.27 52.91 39.15C53.7 37.04 54.5 35.45 54.5 33.86C54.5 32.28 53.79 30.95 52.91 29.63C52.03 28.31 50.14 27.07 49.21 25.93C48.27 24.78 47.57 24.25 47.3 22.75C47.04 21.25 47.3 18.69 47.62 16.93Z" fill="#efd27c" stroke="#6a4636" stroke-width="1.15" stroke-linejoin="round" vector-effect="non-scaling-stroke"/><path d="M81.48 15.87C81.34 16.49 81.38 18.69 80.63 19.58C79.89 20.46 78.27 21.08 77.04 21.16C75.8 21.25 74.16 20.67 73.23 20.11C72.29 19.54 71.73 18.17 71.43 17.78" fill="none" stroke="#6a4636" stroke-width="0.9" stroke-linecap="round" stroke-linejoin="round" vector-effect="non-scaling-stroke"/><path d="M54.81 23.81C55.11 24.34 56.4 25.8 56.61 26.98C56.83 28.17 56.17 30.25 56.08 30.9" fill="none" stroke="#6a4636" stroke-width="0.9" stroke-linecap="round" stroke-linejoin="round" vector-effect="non-scaling-stroke"/><path d="M92.91 50.58C92.91 51.32 93.14 53.49 92.91 55.03C92.68 56.56 91.76 58.99 91.53 59.79" fill="none" stroke="#6a4636" stroke-width="0.9" stroke-linecap="round" stroke-linejoin="round" vector-effect="non-scaling-stroke"/><path d="M63.81 53.97C64.14 54.41 65.38 55.7 65.82 56.61C66.26 57.53 66.21 59.47 66.46 59.47C66.7 59.47 66.74 57.53 67.3 56.61C67.87 55.7 69.42 54.41 69.84 53.97" fill="none" stroke="#6a4636" stroke-width="0.9" stroke-linecap="round" stroke-linejoin="round" vector-effect="non-scaling-stroke"/><path d="M66.46 59.47C66.46 60.32 66.51 62.79 66.46 64.55C66.4 66.31 66.19 69.14 66.14 70.05" fill="none" stroke="#6a4636" stroke-width="0.9" stroke-linecap="round" stroke-linejoin="round" vector-effect="non-scaling-stroke"/><ellipse cx="60.32" cy="16.93" rx="2.12" ry="1.27" transform="rotate(-25 60.32 16.93)" fill="#4a2c1e"/><ellipse cx="63.49" cy="11.64" rx="1.27" ry="0.63" transform="rotate(-15 63.49 11.64)" fill="#4a2c1e"/><ellipse cx="52.59" cy="18.84" rx="1.06" ry="0.53" transform="rotate(-55 52.59 18.84)" fill="#4a2c1e"/><clipPath id="cct"><path d="M7.94 45.5C8.68 45.59 9.93 46.03 10.58 47.09C11.23 48.15 11.71 50.18 11.85 51.85C11.99 53.53 11.29 55.2 11.43 57.14C11.57 59.08 11.96 61.64 12.7 63.49C13.44 65.34 16.05 67.34 15.87 68.25C15.7 69.17 13.05 69.35 11.64 68.99C10.23 68.64 8.5 67.41 7.41 66.14C6.31 64.87 5.61 63.23 5.08 61.38C4.55 59.52 4.29 56.97 4.23 55.03C4.18 53.09 4.44 51.15 4.76 49.74C5.08 48.32 5.61 47.27 6.14 46.56C6.67 45.86 7.2 45.41 7.94 45.5Z"/></clipPath><clipPath id="ccb"><path d="M37.04 19.05C38.36 18.96 40.21 20.37 41.8 21.16C43.39 21.96 45.06 22.84 46.56 23.81C48.06 24.78 49.68 25.66 50.79 26.98C51.9 28.31 52.75 30.25 53.23 31.75C53.7 33.25 53.79 34.57 53.65 35.98C53.51 37.39 53.03 38.45 52.38 40.21C51.73 41.98 50.62 44.27 49.74 46.56C48.85 48.85 47.76 51.68 47.09 53.97C46.42 56.26 45.98 58.38 45.71 60.32C45.45 62.26 45.98 64.11 45.5 65.61C45.03 67.11 44.27 68.29 42.86 69.31C41.45 70.34 39.07 71.22 37.04 71.75C35.01 72.28 32.8 72.45 30.69 72.49C28.57 72.52 26.28 72.26 24.34 71.96C22.4 71.66 20.63 71.39 19.05 70.69C17.46 69.98 15.96 69.1 14.81 67.72C13.67 66.35 12.73 64.55 12.17 62.43C11.6 60.32 11.38 57.5 11.43 55.03C11.48 52.56 11.83 49.91 12.49 47.62C13.14 45.33 14.16 43.39 15.34 41.27C16.53 39.15 17.99 36.77 19.58 34.92C21.16 33.07 23.02 31.66 24.87 30.16C26.72 28.66 29.19 27.34 30.69 25.93C32.19 24.51 32.8 22.84 33.86 21.69C34.92 20.55 35.71 19.14 37.04 19.05Z"/></clipPath><path d="M7.94 45.5C8.68 45.59 9.93 46.03 10.58 47.09C11.23 48.15 11.71 50.18 11.85 51.85C11.99 53.53 11.29 55.2 11.43 57.14C11.57 59.08 11.96 61.64 12.7 63.49C13.44 65.34 16.05 67.34 15.87 68.25C15.7 69.17 13.05 69.35 11.64 68.99C10.23 68.64 8.5 67.41 7.41 66.14C6.31 64.87 5.61 63.23 5.08 61.38C4.55 59.52 4.29 56.97 4.23 55.03C4.18 53.09 4.44 51.15 4.76 49.74C5.08 48.32 5.61 47.27 6.14 46.56C6.67 45.86 7.2 45.41 7.94 45.5Z" fill="#fff"/><g clip-path="url(#cct)"><path d="M2.31 52.14C3.36 50.06 6.92 50.54 8.64 50.64C10.37 50.73 11.62 50.64 12.68 52.71C13.74 54.79 13.83 59.82 14.98 63.09C16.14 66.35 20.94 70.77 19.6 72.31C18.25 73.84 9.8 73.84 6.92 72.31C4.03 70.77 3.07 66.45 2.31 63.09C1.54 59.72 1.25 54.21 2.31 52.14Z" fill="#e9a233"/></g><path d="M7.94 45.5C8.68 45.59 9.93 46.03 10.58 47.09C11.23 48.15 11.71 50.18 11.85 51.85C11.99 53.53 11.29 55.2 11.43 57.14C11.57 59.08 11.96 61.64 12.7 63.49C13.44 65.34 16.05 67.34 15.87 68.25C15.7 69.17 13.05 69.35 11.64 68.99C10.23 68.64 8.5 67.41 7.41 66.14C6.31 64.87 5.61 63.23 5.08 61.38C4.55 59.52 4.29 56.97 4.23 55.03C4.18 53.09 4.44 51.15 4.76 49.74C5.08 48.32 5.61 47.27 6.14 46.56C6.67 45.86 7.2 45.41 7.94 45.5Z" fill="none" stroke="#6a4636" stroke-width="1.15" vector-effect="non-scaling-stroke"/><path d="M37.04 19.05C38.36 18.96 40.21 20.37 41.8 21.16C43.39 21.96 45.06 22.84 46.56 23.81C48.06 24.78 49.68 25.66 50.79 26.98C51.9 28.31 52.75 30.25 53.23 31.75C53.7 33.25 53.79 34.57 53.65 35.98C53.51 37.39 53.03 38.45 52.38 40.21C51.73 41.98 50.62 44.27 49.74 46.56C48.85 48.85 47.76 51.68 47.09 53.97C46.42 56.26 45.98 58.38 45.71 60.32C45.45 62.26 45.98 64.11 45.5 65.61C45.03 67.11 44.27 68.29 42.86 69.31C41.45 70.34 39.07 71.22 37.04 71.75C35.01 72.28 32.8 72.45 30.69 72.49C28.57 72.52 26.28 72.26 24.34 71.96C22.4 71.66 20.63 71.39 19.05 70.69C17.46 69.98 15.96 69.1 14.81 67.72C13.67 66.35 12.73 64.55 12.17 62.43C11.6 60.32 11.38 57.5 11.43 55.03C11.48 52.56 11.83 49.91 12.49 47.62C13.14 45.33 14.16 43.39 15.34 41.27C16.53 39.15 17.99 36.77 19.58 34.92C21.16 33.07 23.02 31.66 24.87 30.16C26.72 28.66 29.19 27.34 30.69 25.93C32.19 24.51 32.8 22.84 33.86 21.69C34.92 20.55 35.71 19.14 37.04 19.05Z" fill="#fff"/><g clip-path="url(#ccb)"><path d="M30.2 25.97C31.04 24.28 32.75 19.48 34.35 18.36C35.94 17.25 37.9 18.65 39.77 19.28C41.63 19.92 44.09 21.01 45.53 22.17C46.97 23.32 48.32 24.76 48.41 26.2C48.51 27.64 47.16 29.66 46.11 30.81C45.05 31.96 43.8 32.64 42.07 33.12C40.34 33.6 37.52 33.88 35.73 33.69C33.95 33.5 32.43 32.83 31.35 31.96C30.28 31.1 29.47 29.5 29.28 28.51C29.09 27.51 29.35 27.66 30.2 25.97Z" fill="#e9a233"/><path d="M19.6 37.73C20.65 37.92 22.19 39.46 23.05 41.18C23.92 42.91 24.55 45.6 24.78 48.1C25.01 50.6 24.82 53.67 24.44 56.17C24.05 58.67 23.19 60.97 22.48 63.09C21.77 65.2 21.42 68.08 20.17 68.85C18.92 69.62 16.43 68.94 14.98 67.7C13.54 66.45 12.2 63.85 11.53 61.36C10.85 58.86 10.66 55.5 10.95 52.71C11.24 49.93 12.3 46.76 13.26 44.64C14.22 42.53 15.66 41.18 16.71 40.03C17.77 38.88 18.54 37.53 19.6 37.73Z" fill="#e9a233"/></g><path d="M37.04 19.05C38.36 18.96 40.21 20.37 41.8 21.16C43.39 21.96 45.06 22.84 46.56 23.81C48.06 24.78 49.68 25.66 50.79 26.98C51.9 28.31 52.75 30.25 53.23 31.75C53.7 33.25 53.79 34.57 53.65 35.98C53.51 37.39 53.03 38.45 52.38 40.21C51.73 41.98 50.62 44.27 49.74 46.56C48.85 48.85 47.76 51.68 47.09 53.97C46.42 56.26 45.98 58.38 45.71 60.32C45.45 62.26 45.98 64.11 45.5 65.61C45.03 67.11 44.27 68.29 42.86 69.31C41.45 70.34 39.07 71.22 37.04 71.75C35.01 72.28 32.8 72.45 30.69 72.49C28.57 72.52 26.28 72.26 24.34 71.96C22.4 71.66 20.63 71.39 19.05 70.69C17.46 69.98 15.96 69.1 14.81 67.72C13.67 66.35 12.73 64.55 12.17 62.43C11.6 60.32 11.38 57.5 11.43 55.03C11.48 52.56 11.83 49.91 12.49 47.62C13.14 45.33 14.16 43.39 15.34 41.27C16.53 39.15 17.99 36.77 19.58 34.92C21.16 33.07 23.02 31.66 24.87 30.16C26.72 28.66 29.19 27.34 30.69 25.93C32.19 24.51 32.8 22.84 33.86 21.69C34.92 20.55 35.71 19.14 37.04 19.05Z" fill="none" stroke="#6a4636" stroke-width="1.15" stroke-linejoin="round" vector-effect="non-scaling-stroke"/><path d="M31.75 64.76C31.82 65.82 32.1 70.05 32.17 71.11" fill="none" stroke="#6a4636" stroke-width="0.8" stroke-linecap="round" stroke-linejoin="round" vector-effect="non-scaling-stroke"/><path d="M42.33 62.65C42.5 63.58 43.21 67.32 43.39 68.25" fill="none" stroke="#6a4636" stroke-width="0.8" stroke-linecap="round" stroke-linejoin="round" vector-effect="non-scaling-stroke"/><path d="M34.92 67.72C34.96 68.36 35.1 70.9 35.13 71.53" fill="none" stroke="#6a4636" stroke-width="0.8" stroke-linecap="round" stroke-linejoin="round" vector-effect="non-scaling-stroke"/><ellipse cx="36.65" cy="30.58" rx="0.74" ry="0.53" transform="rotate(-30 36.65 30.58)" fill="#4a2c1e"/><path d="M37.12 35.19C37.42 35.5 38.38 36.57 38.96 37.04C39.54 37.5 40.3 37.8 40.57 37.96" fill="none" stroke="#4a2c1e" stroke-width="1.1" stroke-linecap="round" stroke-linejoin="round" vector-effect="non-scaling-stroke"/><path d="M49.56 31.39C49.53 31.87 49.45 33.29 49.33 34.27C49.22 35.25 48.95 36.77 48.87 37.27" fill="none" stroke="#4a2c1e" stroke-width="1.1" stroke-linecap="round" stroke-linejoin="round" vector-effect="non-scaling-stroke"/><path d="M45.88 37.27C46.3 37.23 47.57 37.15 48.41 37.04C49.26 36.92 50.52 36.65 50.95 36.57" fill="none" stroke="#4a2c1e" stroke-width="1.1" stroke-linecap="round" stroke-linejoin="round" vector-effect="non-scaling-stroke"/></g>
<g id="pairD"><g transform="translate(1.3 0.73) scale(0.813)"><path d="M47.62 16.93C47.94 15.17 48.32 13.58 49.21 12.17C50.09 10.76 51.5 9.47 52.91 8.47C54.32 7.46 55.91 6.67 57.67 6.14C59.44 5.61 61.55 5.34 63.49 5.29C65.43 5.24 67.46 5.38 69.31 5.82C71.16 6.26 73.02 7 74.6 7.94C76.19 8.87 77.69 10.11 78.84 11.43C79.98 12.75 81.13 14.51 81.48 15.87C81.83 17.23 80.69 18.25 80.95 19.58C81.22 20.9 82.1 22.13 83.07 23.81C84.04 25.49 85.63 27.51 86.77 29.63C87.92 31.75 89.07 34.04 89.95 36.51C90.83 38.98 91.57 42.1 92.06 44.44C92.56 46.79 92.38 49.7 92.91 50.58C93.44 51.46 94.41 49.52 95.24 49.74C96.07 49.95 97.18 50.62 97.88 51.85C98.59 53.09 99.29 55.2 99.47 57.14C99.65 59.08 99.56 61.73 98.94 63.49C98.32 65.26 97.27 66.58 95.77 67.72C94.27 68.87 92.15 69.79 89.95 70.37C87.74 70.95 85.19 71.09 82.54 71.22C79.89 71.34 76.37 71.2 74.07 71.11C71.78 71.02 70.11 70.9 68.78 70.69C67.46 70.48 67.37 69.74 66.14 69.84C64.9 69.95 63.23 71.11 61.38 71.32C59.52 71.53 57.05 71.45 55.03 71.11C53 70.78 50.67 70.23 49.21 69.31C47.74 68.4 46.83 67.11 46.24 65.61C45.66 64.11 45.57 62.26 45.71 60.32C45.86 58.38 46.42 56.26 47.09 53.97C47.76 51.68 48.77 49.03 49.74 46.56C50.71 44.09 52.12 41.27 52.91 39.15C53.7 37.04 54.5 35.45 54.5 33.86C54.5 32.28 53.79 30.95 52.91 29.63C52.03 28.31 50.14 27.07 49.21 25.93C48.27 24.78 47.57 24.25 47.3 22.75C47.04 21.25 47.3 18.69 47.62 16.93Z" fill="#8a8a8a" stroke="#6a4636" stroke-width="1.15" stroke-linejoin="round" vector-effect="non-scaling-stroke"/><path d="M81.48 15.87C81.34 16.49 81.38 18.69 80.63 19.58C79.89 20.46 78.27 21.08 77.04 21.16C75.8 21.25 74.16 20.67 73.23 20.11C72.29 19.54 71.73 18.17 71.43 17.78" fill="none" stroke="#6a4636" stroke-width="0.9" stroke-linecap="round" stroke-linejoin="round" vector-effect="non-scaling-stroke"/><path d="M54.81 23.81C55.11 24.34 56.4 25.8 56.61 26.98C56.83 28.17 56.17 30.25 56.08 30.9" fill="none" stroke="#6a4636" stroke-width="0.9" stroke-linecap="round" stroke-linejoin="round" vector-effect="non-scaling-stroke"/><path d="M92.91 50.58C92.91 51.32 93.14 53.49 92.91 55.03C92.68 56.56 91.76 58.99 91.53 59.79" fill="none" stroke="#6a4636" stroke-width="0.9" stroke-linecap="round" stroke-linejoin="round" vector-effect="non-scaling-stroke"/><path d="M63.81 53.97C64.14 54.41 65.38 55.7 65.82 56.61C66.26 57.53 66.21 59.47 66.46 59.47C66.7 59.47 66.74 57.53 67.3 56.61C67.87 55.7 69.42 54.41 69.84 53.97" fill="none" stroke="#6a4636" stroke-width="0.9" stroke-linecap="round" stroke-linejoin="round" vector-effect="non-scaling-stroke"/><path d="M66.46 59.47C66.46 60.32 66.51 62.79 66.46 64.55C66.4 66.31 66.19 69.14 66.14 70.05" fill="none" stroke="#6a4636" stroke-width="0.9" stroke-linecap="round" stroke-linejoin="round" vector-effect="non-scaling-stroke"/><ellipse cx="60.32" cy="16.93" rx="2.12" ry="1.27" transform="rotate(-25 60.32 16.93)" fill="#5a3424"/><ellipse cx="63.49" cy="11.64" rx="1.27" ry="0.63" transform="rotate(-15 63.49 11.64)" fill="#5a3424"/><ellipse cx="52.59" cy="18.84" rx="1.06" ry="0.53" transform="rotate(-55 52.59 18.84)" fill="#5a3424"/></g><g transform="translate(2.3 0) scale(0.83)"><g><clipPath id="dct"><path d="M7.41 43.39C8.24 43.44 9.44 43.92 10.05 44.97C10.67 46.03 11.02 48.06 11.11 49.74C11.2 51.41 10.49 53.26 10.58 55.03C10.67 56.79 10.93 58.55 11.64 60.32C12.35 62.08 14.46 64.37 14.81 65.61C15.17 66.84 14.64 67.51 13.76 67.72C12.87 67.94 10.85 67.5 9.52 66.88C8.2 66.26 6.79 65.29 5.82 64.02C4.85 62.75 4.2 61.02 3.7 59.26C3.21 57.5 2.91 55.29 2.86 53.44C2.8 51.59 3.02 49.61 3.39 48.15C3.76 46.68 4.41 45.45 5.08 44.66C5.75 43.86 6.58 43.33 7.41 43.39Z"/></clipPath><clipPath id="dcb"><path d="M34.71 18.84C35.63 18.69 36.24 19.93 37.25 20.32C38.25 20.71 39.37 20.76 40.74 21.16C42.12 21.57 44 21.87 45.5 22.75C47 23.63 48.68 24.87 49.74 26.46C50.79 28.04 51.55 30.16 51.85 32.28C52.15 34.39 51.89 36.95 51.53 39.15C51.18 41.36 50.48 43.39 49.74 45.5C48.99 47.62 47.88 49.82 47.09 51.85C46.3 53.88 45.56 55.73 44.97 57.67C44.39 59.61 44.04 61.82 43.6 63.49C43.16 65.17 43.07 66.75 42.33 67.72C41.59 68.69 40.39 68.96 39.15 69.31C37.92 69.66 36.33 69.66 34.92 69.84C33.51 70.02 32.1 70.23 30.69 70.37C29.28 70.51 27.87 70.86 26.46 70.69C25.04 70.51 23.63 69.81 22.22 69.31C20.81 68.82 19.31 68.38 17.99 67.72C16.67 67.07 15.34 66.63 14.29 65.4C13.23 64.16 12.26 62.4 11.64 60.32C11.02 58.24 10.62 55.38 10.58 52.91C10.55 50.44 10.9 47.8 11.43 45.5C11.96 43.21 12.75 41.18 13.76 39.15C14.76 37.13 16.05 35.13 17.46 33.33C18.87 31.53 20.55 29.86 22.22 28.36C23.9 26.86 25.93 25.54 27.51 24.34C29.1 23.14 30.55 22.08 31.75 21.16C32.95 20.25 33.79 18.98 34.71 18.84Z"/></clipPath><path d="M7.41 43.39C8.24 43.44 9.44 43.92 10.05 44.97C10.67 46.03 11.02 48.06 11.11 49.74C11.2 51.41 10.49 53.26 10.58 55.03C10.67 56.79 10.93 58.55 11.64 60.32C12.35 62.08 14.46 64.37 14.81 65.61C15.17 66.84 14.64 67.51 13.76 67.72C12.87 67.94 10.85 67.5 9.52 66.88C8.2 66.26 6.79 65.29 5.82 64.02C4.85 62.75 4.2 61.02 3.7 59.26C3.21 57.5 2.91 55.29 2.86 53.44C2.8 51.59 3.02 49.61 3.39 48.15C3.76 46.68 4.41 45.45 5.08 44.66C5.75 43.86 6.58 43.33 7.41 43.39Z" fill="#f1d072"/><g clip-path="url(#dct)"><path d="M4.23 49.74L8.47 48.47" stroke="#e79a32" stroke-width="2.01" stroke-linecap="round" fill="none"/><path d="M3.81 54.39L8.68 53.44" stroke="#e79a32" stroke-width="2.01" stroke-linecap="round" fill="none"/><path d="M4.87 59.05L9.52 57.78" stroke="#e79a32" stroke-width="2.01" stroke-linecap="round" fill="none"/></g><path d="M7.41 43.39C8.24 43.44 9.44 43.92 10.05 44.97C10.67 46.03 11.02 48.06 11.11 49.74C11.2 51.41 10.49 53.26 10.58 55.03C10.67 56.79 10.93 58.55 11.64 60.32C12.35 62.08 14.46 64.37 14.81 65.61C15.17 66.84 14.64 67.51 13.76 67.72C12.87 67.94 10.85 67.5 9.52 66.88C8.2 66.26 6.79 65.29 5.82 64.02C4.85 62.75 4.2 61.02 3.7 59.26C3.21 57.5 2.91 55.29 2.86 53.44C2.8 51.59 3.02 49.61 3.39 48.15C3.76 46.68 4.41 45.45 5.08 44.66C5.75 43.86 6.58 43.33 7.41 43.39Z" fill="none" stroke="#6a4636" stroke-width="1.15" vector-effect="non-scaling-stroke"/><path d="M34.71 18.84C35.63 18.69 36.24 19.93 37.25 20.32C38.25 20.71 39.37 20.76 40.74 21.16C42.12 21.57 44 21.87 45.5 22.75C47 23.63 48.68 24.87 49.74 26.46C50.79 28.04 51.55 30.16 51.85 32.28C52.15 34.39 51.89 36.95 51.53 39.15C51.18 41.36 50.48 43.39 49.74 45.5C48.99 47.62 47.88 49.82 47.09 51.85C46.3 53.88 45.56 55.73 44.97 57.67C44.39 59.61 44.04 61.82 43.6 63.49C43.16 65.17 43.07 66.75 42.33 67.72C41.59 68.69 40.39 68.96 39.15 69.31C37.92 69.66 36.33 69.66 34.92 69.84C33.51 70.02 32.1 70.23 30.69 70.37C29.28 70.51 27.87 70.86 26.46 70.69C25.04 70.51 23.63 69.81 22.22 69.31C20.81 68.82 19.31 68.38 17.99 67.72C16.67 67.07 15.34 66.63 14.29 65.4C13.23 64.16 12.26 62.4 11.64 60.32C11.02 58.24 10.62 55.38 10.58 52.91C10.55 50.44 10.9 47.8 11.43 45.5C11.96 43.21 12.75 41.18 13.76 39.15C14.76 37.13 16.05 35.13 17.46 33.33C18.87 31.53 20.55 29.86 22.22 28.36C23.9 26.86 25.93 25.54 27.51 24.34C29.1 23.14 30.55 22.08 31.75 21.16C32.95 20.25 33.79 18.98 34.71 18.84Z" fill="#f1d072"/><g clip-path="url(#dcb)"><path d="M18.2 37.46L23.92 35.13" stroke="#e79a32" stroke-width="4.02" stroke-linecap="round" fill="none"/><path d="M13.54 42.75L19.05 44.66" stroke="#e79a32" stroke-width="4.02" stroke-linecap="round" fill="none"/><path d="M11.01 48.04L14.81 50.58" stroke="#e79a32" stroke-width="3.17" stroke-linecap="round" fill="none"/><path d="M39.79 23.92L42.12 27.09" stroke="#e79a32" stroke-width="2.01" stroke-linecap="round" fill="none"/><path d="M42.75 24.97L44.87 28.57" stroke="#e79a32" stroke-width="2.01" stroke-linecap="round" fill="none"/><path d="M45.71 26.46L47.2 29.42" stroke="#e79a32" stroke-width="1.69" stroke-linecap="round" fill="none"/></g><path d="M34.71 18.84C35.63 18.69 36.24 19.93 37.25 20.32C38.25 20.71 39.37 20.76 40.74 21.16C42.12 21.57 44 21.87 45.5 22.75C47 23.63 48.68 24.87 49.74 26.46C50.79 28.04 51.55 30.16 51.85 32.28C52.15 34.39 51.89 36.95 51.53 39.15C51.18 41.36 50.48 43.39 49.74 45.5C48.99 47.62 47.88 49.82 47.09 51.85C46.3 53.88 45.56 55.73 44.97 57.67C44.39 59.61 44.04 61.82 43.6 63.49C43.16 65.17 43.07 66.75 42.33 67.72C41.59 68.69 40.39 68.96 39.15 69.31C37.92 69.66 36.33 69.66 34.92 69.84C33.51 70.02 32.1 70.23 30.69 70.37C29.28 70.51 27.87 70.86 26.46 70.69C25.04 70.51 23.63 69.81 22.22 69.31C20.81 68.82 19.31 68.38 17.99 67.72C16.67 67.07 15.34 66.63 14.29 65.4C13.23 64.16 12.26 62.4 11.64 60.32C11.02 58.24 10.62 55.38 10.58 52.91C10.55 50.44 10.9 47.8 11.43 45.5C11.96 43.21 12.75 41.18 13.76 39.15C14.76 37.13 16.05 35.13 17.46 33.33C18.87 31.53 20.55 29.86 22.22 28.36C23.9 26.86 25.93 25.54 27.51 24.34C29.1 23.14 30.55 22.08 31.75 21.16C32.95 20.25 33.79 18.98 34.71 18.84Z" fill="none" stroke="#6a4636" stroke-width="1.15" stroke-linejoin="round" vector-effect="non-scaling-stroke"/><path d="M33.23 30.05C33.44 30.26 34.11 31.25 34.5 31.32C34.89 31.39 35.38 30.62 35.56 30.48" fill="none" stroke="#4a2c1e" stroke-width="1" stroke-linecap="round" stroke-linejoin="round" vector-effect="non-scaling-stroke"/><path d="M35.34 35.34C35.63 35.66 36.3 37.07 37.04 37.25C37.78 37.43 39.33 36.54 39.79 36.4" fill="none" stroke="#4a2c1e" stroke-width="1" stroke-linecap="round" stroke-linejoin="round" vector-effect="non-scaling-stroke"/><path d="M46.35 29.84C46.42 30.37 46.74 31.92 46.77 33.02C46.81 34.11 46.6 35.84 46.56 36.4" fill="none" stroke="#4a2c1e" stroke-width="1" stroke-linecap="round" stroke-linejoin="round" vector-effect="non-scaling-stroke"/><path d="M43.39 36.61C43.92 36.61 45.5 36.54 46.56 36.61C47.62 36.68 49.21 36.97 49.74 37.04" fill="none" stroke="#4a2c1e" stroke-width="1" stroke-linecap="round" stroke-linejoin="round" vector-effect="non-scaling-stroke"/><path d="M29.74 63.49C29.77 64.46 29.91 68.34 29.95 69.31" fill="none" stroke="#6a4636" stroke-width="0.8" stroke-linecap="round" stroke-linejoin="round" vector-effect="non-scaling-stroke"/><path d="M39.37 62.43C39.54 63.35 40.25 67.02 40.42 67.94" fill="none" stroke="#6a4636" stroke-width="0.8" stroke-linecap="round" stroke-linejoin="round" vector-effect="non-scaling-stroke"/></g></g></g>
<g id="logo"><g fill="#a3a3a3"><ellipse cx="339.5" cy="224.5" rx="6.6" ry="8.8" transform="rotate(12 339.5 224.5)"/><ellipse cx="331" cy="211" rx="3.6" ry="2.8" transform="rotate(35 331 211)"/><ellipse cx="341" cy="208.3" rx="2.6" ry="3.4" transform="rotate(-20 341 208.3)"/><ellipse cx="325" cy="220.5" rx="4" ry="2.9" transform="rotate(20 325 220.5)"/><ellipse cx="326.8" cy="230.3" rx="3.4" ry="2.7" transform="rotate(-15 326.8 230.3)"/></g><g transform="translate(312.2 224.5) rotate(-8) scale(0.95)" fill="#a3a3a3"><ellipse cx="0" cy="2" rx="4.2" ry="3.6"/><ellipse cx="-5.2" cy="-1.5" rx="1.6" ry="2.1" transform="rotate(-25 -5.2 -1.5)"/><ellipse cx="-2" cy="-4.6" rx="1.6" ry="2.2" transform="rotate(-8 -2 -4.6)"/><ellipse cx="2" cy="-4.6" rx="1.6" ry="2.2" transform="rotate(8 2 -4.6)"/><ellipse cx="5.2" cy="-1.5" rx="1.6" ry="2.1" transform="rotate(25 5.2 -1.5)"/></g><g transform="translate(438.8 226) rotate(8) scale(1)" fill="#a3a3a3"><ellipse cx="0" cy="2" rx="4.2" ry="3.6"/><ellipse cx="-5.2" cy="-1.5" rx="1.6" ry="2.1" transform="rotate(-25 -5.2 -1.5)"/><ellipse cx="-2" cy="-4.6" rx="1.6" ry="2.2" transform="rotate(-8 -2 -4.6)"/><ellipse cx="2" cy="-4.6" rx="1.6" ry="2.2" transform="rotate(8 2 -4.6)"/><ellipse cx="5.2" cy="-1.5" rx="1.6" ry="2.1" transform="rotate(25 5.2 -1.5)"/></g><g transform="translate(456 223.5) rotate(25) scale(0.9)" fill="#a3a3a3"><ellipse cx="0" cy="2" rx="4.2" ry="3.6"/><ellipse cx="-5.2" cy="-1.5" rx="1.6" ry="2.1" transform="rotate(-25 -5.2 -1.5)"/><ellipse cx="-2" cy="-4.6" rx="1.6" ry="2.2" transform="rotate(-8 -2 -4.6)"/><ellipse cx="2" cy="-4.6" rx="1.6" ry="2.2" transform="rotate(8 2 -4.6)"/><ellipse cx="5.2" cy="-1.5" rx="1.6" ry="2.1" transform="rotate(25 5.2 -1.5)"/></g><text x="338.3" y="229.8" font-family="'DejaVu Sans Condensed','DejaVu Sans','Liberation Sans',sans-serif" font-size="25" fill="#f6d93c" stroke="#c49a1a" stroke-width="1.7" stroke-linejoin="round" paint-order="stroke" textLength="92.6" lengthAdjust="spacingAndGlyphs">Cat<tspan font-size="15.5" font-weight="bold" stroke-width="1">&amp;</tspan>Dog</text></g>
<g id="frames"><rect x="247.8" y="116.8" width="122.4" height="85.6" fill="#fff" stroke="#c6c6c6" stroke-width="1"/><rect x="375.6" y="116.8" width="121.2" height="85.6" fill="#fff" stroke="#c6c6c6" stroke-width="1"/><use href="#pairA" x="260" y="120"/><use href="#pairB" x="385" y="120"/></g>
<g id="lower"><use href="#logo"/><use href="#pairC" transform="translate(300 239.2) scale(0.82)"/><use href="#pairD" x="383" y="238"/></g>
<linearGradient id="gbot" x1="0" x2="1"><stop offset="0" stop-color="#00a2ee"/><stop offset="0.42" stop-color="#00a0ec"/><stop offset="0.57" stop-color="#0a74da"/><stop offset="0.74" stop-color="#083cc0"/><stop offset="1" stop-color="#0630b4"/></linearGradient>
<linearGradient id="gtop" x1="0" x2="1"><stop offset="0" stop-color="#00a2ee"/><stop offset="0.36" stop-color="#0a94e4"/><stop offset="0.55" stop-color="#1468d0"/><stop offset="0.7" stop-color="#0a3cb8"/><stop offset="0.982" stop-color="#0a34b0"/><stop offset="0.988" stop-color="#19a8ee"/><stop offset="1" stop-color="#19a8ee"/></linearGradient><linearGradient id="gtop2" x1="0" x2="1"><stop offset="0" stop-color="#00a2ee"/><stop offset="0.3" stop-color="#1a86d8"/><stop offset="0.6" stop-color="#2c64b8"/><stop offset="1" stop-color="#1c3c9c"/></linearGradient>
<filter id="soft" x="0" y="0" width="1" height="1" filterUnits="objectBoundingBox"><feGaussianBlur stdDeviation="0.45"/></filter>
</defs>
<g filter="url(#soft)">
<rect x="70" y="20" width="800" height="680" fill="#fff"/>
<rect x="79" y="27" width="775" height="320" fill="url(#gbot)"/>
<rect x="79" y="27" width="775" height="1.9" fill="url(#gtop)"/>
<rect x="79" y="28.8" width="3.7" height="315.2" fill="#00a2ee"/>
<rect x="82.7" y="28.8" width="771.8" height="315.2" fill="#262626"/>
<rect x="82.7" y="28.8" width="771.8" height="32.5" fill="#474747"/>
<rect x="82.7" y="61.3" width="13.3" height="276" fill="#474747"/>
<rect x="82.7" y="337" width="290.3" height="7" fill="#3a3238"/>
<rect x="373" y="337" width="362.5" height="7" fill="#2b2b2b"/>
<rect x="236.3" y="107.3" width="358.7" height="202.4" fill="#0c0c0c"/>
<rect x="237.1" y="108" width="357" height="200.7" fill="#fff"/>
<use href="#frames"/><use href="#lower"/>
<text x="86.2" y="35.3" font-size="4.3" fill="#eee" font-weight="bold" textLength="53.3" lengthAdjust="spacingAndGlyphs">Photopea | Online Photo Editor</text>
<text x="86" y="46.3" font-size="4.6" fill="#d8d8d8" opacity="0.85" textLength="17.7" lengthAdjust="spacingAndGlyphs">ファイル</text>
<text x="110" y="46.3" font-size="4.6" fill="#d8d8d8" opacity="0.85" textLength="9" lengthAdjust="spacingAndGlyphs">編集</text>
<text x="125.6" y="46.3" font-size="4.6" fill="#d8d8d8" opacity="0.85" textLength="9" lengthAdjust="spacingAndGlyphs">画像</text>
<text x="141" y="46.3" font-size="4.6" fill="#d8d8d8" opacity="0.85" textLength="17.7" lengthAdjust="spacingAndGlyphs">レイヤー</text>
<text x="165.5" y="46.3" font-size="4.6" fill="#d8d8d8" opacity="0.85" textLength="9" lengthAdjust="spacingAndGlyphs">選択</text>
<text x="180.5" y="46.3" font-size="4.6" fill="#d8d8d8" opacity="0.85" textLength="22.5" lengthAdjust="spacingAndGlyphs">フィルター</text>
<text x="209.7" y="46.3" font-size="4.6" fill="#d8d8d8" opacity="0.85" textLength="9.6" lengthAdjust="spacingAndGlyphs">表示</text>
<text x="225.5" y="46.3" font-size="4.6" fill="#d8d8d8" opacity="0.85" textLength="22.8" lengthAdjust="spacingAndGlyphs">ウインドウ</text>
<text x="255.4" y="46.3" font-size="4.6" fill="#d8d8d8" opacity="0.85" textLength="12.3" lengthAdjust="spacingAndGlyphs">その他</text>
<rect x="272.6" y="40.9" width="26.7" height="8.3" fill="#c00000"/>
<text x="274.3" y="46.3" font-size="4.6" fill="#fff" font-weight="bold" textLength="23.3" lengthAdjust="spacingAndGlyphs">アカウント</text>
<g fill="none" stroke="#e8e8e8" stroke-width="1.1"><circle cx="305.2" cy="43.7" r="2.1"/><path d="M306.8 45.4L309.6 48.4" stroke-width="1.4"/><path d="M314.2 43.6v-1.8h1.8M319 41.8h1.8v1.8M320.8 46.6v1.8H319M316 48.4h-1.8v-1.8" stroke-width="0.9"/></g>
<text x="693.7" y="46.3" font-size="4.6" fill="#d0d0d0" opacity="0.8" textLength="30.3" lengthAdjust="spacingAndGlyphs">アプリについて</text>
<text x="729.8" y="46.3" font-size="4.6" fill="#d0d0d0" opacity="0.8" textLength="22.9" lengthAdjust="spacingAndGlyphs">バグを報告</text>
<text x="758" y="46.3" font-size="4.6" fill="#d0d0d0" opacity="0.8" textLength="23" lengthAdjust="spacingAndGlyphs">ラーニング</text>
<text x="785.5" y="46.3" font-size="4.6" fill="#d0d0d0" opacity="0.8" textLength="9.1" lengthAdjust="spacingAndGlyphs">Blog</text>
<text x="799.6" y="46.3" font-size="4.6" fill="#d0d0d0" opacity="0.8" textLength="6.6" lengthAdjust="spacingAndGlyphs">API</text>
<g fill="#f0f0f0"><circle cx="815.3" cy="45.6" r="3.2"/><circle cx="812.3" cy="43.6" r="1"/><circle cx="818.3" cy="43.6" r="1"/><path d="M815.3 42.5l.6-1.8 1.6.4" stroke="#f0f0f0" stroke-width=".5" fill="none"/><path d="M823.6 42.4c1.6 1.6 3 2 3.6 2 0-2 2-2.8 3-1.6l1-.3-.6 1c.2 3.6-3.6 6-7.2 4.2 1 0 2-.3 2.4-.8-1.2-.6-2.2-2.5-2.2-4.5z"/><circle cx="837.3" cy="45" r="3.6"/></g><path d="M836.8 48.6v-3h-1v-1.2h1v-.8c0-1 .6-1.5 1.5-1.5l.8.1v1h-.6c-.4 0-.5.2-.5.5v.700h1.1l-.2 1.2h-.9v3z" fill="#474747"/>
<path d="M86.6 52.6v6l1.5-1.4 1.1 2.3.9-.4-1.1-2.3h2z" fill="#e8e8e8"/><path d="M91 57.5h2.2v2.2H91z" fill="none" stroke="#ddd" stroke-width=".5"/>
<rect x="97.8" y="53.6" width="4.8" height="4.8" fill="#1f6fe0" rx="0.8"/>
<path d="M98.8 56l1.1 1.1 1.9-2.2" stroke="#fff" stroke-width=".8" fill="none"/>
<text x="104" y="57.7" font-size="4.6" fill="#d8d8d8" opacity="0.85" textLength="30.7" lengthAdjust="spacingAndGlyphs">オートセレクト</text>
<rect x="142" y="53.6" width="4.8" height="4.8" fill="#1f6fe0" rx="0.8"/>
<path d="M143 56l1.1 1.1 1.9-2.2" stroke="#fff" stroke-width=".8" fill="none"/>
<text x="147.7" y="57.7" font-size="4.6" fill="#d8d8d8" opacity="0.85" textLength="36.3" lengthAdjust="spacingAndGlyphs">変換コントロール</text>
<rect x="190" y="53.8" width="4.4" height="4.4" fill="#f4f4f4" rx="0.6"/>
<text x="196" y="57.7" font-size="4.6" fill="#d8d8d8" opacity="0.85" textLength="9" lengthAdjust="spacingAndGlyphs">距離</text>
<rect x="211.4" y="52" width="14.1" height="7.7" fill="#222"/>
<text x="213.6" y="57.7" font-size="4.4" fill="#ddd">1x</text>
<path d="M220.6 55l1.3 1.5 1.3-1.5" stroke="#ddd" stroke-width=".6" fill="none"/>
<rect x="228" y="52" width="19" height="7.7" fill="#5e5e5e"/>
<rect x="248.3" y="52" width="18.1" height="7.7" fill="#5e5e5e"/>
<path d="M232.5 53v3.2M230.8 55l1.7 1.7 1.7-1.7M230.2 58.6h4.6" stroke="#f0f0f0" stroke-width="1" fill="none"/>
<path d="M252.8 53v3.2M251.1 55l1.7 1.7 1.7-1.7M250.5 58.6h4.6" stroke="#f0f0f0" stroke-width="1" fill="none"/>
<text x="236.4" y="57.7" font-size="4.7" fill="#d8d8d8" textLength="9.6" lengthAdjust="spacingAndGlyphs">PNG</text>
<text x="256.7" y="57.7" font-size="4.7" fill="#d8d8d8" textLength="9.2" lengthAdjust="spacingAndGlyphs">SVG</text>
<rect x="274.2" y="55.7" width="5.4" height="3.8" rx=".5" stroke="#bcbcbc" stroke-width=".8" fill="none"/><rect x="274.7" y="53.5" width="2.4" height="2.4" fill="#f4f4f4"/>
<rect x="284.8" y="55.7" width="5.4" height="3.8" rx=".5" stroke="#bcbcbc" stroke-width=".8" fill="none"/><rect x="286.4" y="53.5" width="2.4" height="2.4" fill="#f4f4f4"/>
<rect x="295.7" y="55.7" width="5.4" height="3.8" rx=".5" stroke="#bcbcbc" stroke-width=".8" fill="none"/><rect x="298.4" y="53.5" width="2.4" height="2.4" fill="#f4f4f4"/>
<path d="M306 53.4l1.7 1.6 1.7-1.6M306 59.6l1.7-1.6 1.7 1.6M307.7 55v3" stroke="#b0b0b0" stroke-width=".6" fill="none"/>
<rect x="320.6" y="53.8" width="4" height="5.4" rx=".4" stroke="#bcbcbc" stroke-width=".8" fill="none"/><rect x="323.2" y="53.6" width="2.8" height="2.6" fill="#f4f4f4"/>
<rect x="330.2" y="53.8" width="4" height="5.4" rx=".4" stroke="#bcbcbc" stroke-width=".8" fill="none"/><rect x="332.8" y="55.2" width="2.8" height="2.6" fill="#f4f4f4"/>
<rect x="339.9" y="53.8" width="4" height="5.4" rx=".4" stroke="#bcbcbc" stroke-width=".8" fill="none"/><rect x="342.5" y="56.8" width="2.8" height="2.6" fill="#f4f4f4"/>
<path d="M349.6 55.2h6.5M349.6 57.5h6.5M352.8 54v4.7" stroke="#aaa" stroke-width=".7"/>
<rect x="82.7" y="62.8" width="13.3" height="9.2" fill="#5a5a5a"/>
<rect x="97.1" y="63.2" width="62.9" height="8.6" fill="#3d3d3d"/>
<text x="99.9" y="69.2" font-size="4.5" fill="#e0e0e0" opacity="0.9" textLength="45.2" lengthAdjust="spacingAndGlyphs">新規プロジェクト.psd *</text>
<path d="M154 65.3l3.8 3.8M157.8 65.3l-3.8 3.8" stroke="#e8e8e8" stroke-width=".8"/>
<path d="M87 63.9v6.4l1.6-1.5 1.2 2.5.9-.4-1.2-2.5h2.2z" fill="#f0f0f0"/>
<path d="M93.2 71.7h1.3v-1.3z" fill="#cfcfcf"/>
<rect x="86.4" y="75.8" width="6.4" height="5.4" stroke="#cfcfcf" stroke-width=".7" stroke-dasharray="1.2 .8" fill="none"/>
<path d="M93.2 82.7h1.3v-1.3z" fill="#cfcfcf"/>
<ellipse cx="89.6" cy="89.2" rx="3.2" ry="2.2" stroke="#e4e4e4" stroke-width=".9" fill="none" stroke-linecap="round"/><path d="M87.6 91.2l-.8 2.4" stroke="#e4e4e4" stroke-width=".9" fill="none" stroke-linecap="round"/>
<path d="M93.2 94h1.3v-1.3z" fill="#cfcfcf"/>
<path d="M88 99.4l4.6 4.6" stroke="#e4e4e4" fill="none" stroke-linecap="round" stroke-width="1.3"/><circle cx="87.4" cy="98.8" r="1.1" fill="#eee"/>
<path d="M93.2 105.2h1.3v-1.3z" fill="#cfcfcf"/>
<path d="M88 108.4v5.6h5.6M86.2 110.2h5.6v5.6" stroke="#e4e4e4" stroke-width=".9" fill="none" stroke-linecap="round"/>
<path d="M93.2 116.2h1.3v-1.3z" fill="#cfcfcf"/>
<path d="M86.8 125.4l4.2-4.2" stroke="#e4e4e4" fill="none" stroke-linecap="round" stroke-width="1.1"/><circle cx="91.4" cy="120.8" r="1.3" fill="#eee"/>
<path d="M93.2 126.8h1.3v-1.3z" fill="#cfcfcf"/>
<circle cx="88.6" cy="133.2" r="1.8" stroke="#e4e4e4" stroke-width=".9" fill="none" stroke-linecap="round"/><circle cx="90.8" cy="135.2" r="1.8" stroke="#e4e4e4" stroke-width=".9" fill="none" stroke-linecap="round"/><path d="M89.6 132.2l2.6-3" stroke="#e4e4e4" stroke-width=".9" fill="none" stroke-linecap="round"/>
<path d="M93.2 138h1.3v-1.3z" fill="#cfcfcf"/>
<path d="M89 145.3l3.4-3.6" stroke="#f0f0f0" stroke-width="1.3" stroke-linecap="round"/><ellipse cx="87.8" cy="146.7" rx="1.7" ry="1.3" transform="rotate(-45 87.8 146.7)" fill="#f0f0f0"/>
<path d="M93.2 149.1h1.3v-1.3z" fill="#cfcfcf"/>
<circle cx="89.6" cy="153.6" r="1.5" fill="#f0f0f0"/><path d="M88.1 154.5h3v2h-3zM86.4 157.6h6.4v1.3h-6.4z" fill="#f0f0f0"/>
<path d="M93.2 160.2h1.3v-1.3z" fill="#cfcfcf"/>
<rect x="86.8" y="165.3" width="5.6" height="3.4" rx=".8" transform="rotate(-40 89.6 167)" fill="#f0f0f0"/>
<path d="M93.2 171.2h1.3v-1.3z" fill="#cfcfcf"/>
<rect x="86.4" y="175.9" width="6.4" height="4.8" fill="#bdbdbd"/><rect x="86.4" y="175.9" width="3" height="4.8" fill="#eee"/>
<path d="M93.2 182.5h1.3v-1.3z" fill="#cfcfcf"/>
<path d="M89.6 185.8c2 2.5 2.7 3.6 2.7 4.7a2.7 2.7 0 0 1-5.4 0c0-1.1.7-2.2 2.7-4.7z" fill="#f0f0f0"/>
<path d="M93.2 193.6h1.3v-1.3z" fill="#cfcfcf"/>
<circle cx="90.4" cy="198.8" r="2" fill="#f0f0f0"/><path d="M89 200.4l-2.8 3" stroke="#eee" stroke-width="1" stroke-linecap="round"/>
<path d="M93.2 204.2h1.3v-1.3z" fill="#cfcfcf"/>
<path d="M93.2 215.4h1.3v-1.3z" fill="#cfcfcf"/>
<path d="M88.4 223.7l3.8-3.8" stroke="#f0f0f0" stroke-width="1.4" stroke-linecap="round"/><circle cx="87" cy="225.1" r="1" fill="#f0f0f0"/>
<path d="M93.2 226.7h1.3v-1.3z" fill="#cfcfcf"/>
<path d="M87.6 230.4v5.4l1.4-1.3 1 2.1.8-.4-1-2.1h1.8z" fill="#9a9a9a"/>
<path d="M93.2 237.6h1.3v-1.3z" fill="#cfcfcf"/>
<rect x="86.1" y="241.8" width="7" height="4.4" rx=".6" fill="#f0f0f0"/>
<path d="M93.2 248.2h1.3v-1.3z" fill="#cfcfcf"/>
<path d="M88 255.9c0-2.5.4-4 1.2-4s.8 1 .8 2c0-1.6.3-2.6 1-2.6s.9 1 .9 2.6c.1-1.2.4-2 1-2s.8 1.2.8 3.2c0 3-1 4.6-3 4.6s-3.4-1.6-4-3.8c.5-.5 1-.4 1.3 0z" fill="#f0f0f0"/>
<path d="M93.2 259.5h1.3v-1.3z" fill="#cfcfcf"/>
<circle cx="88.8" cy="265.1" r="2" stroke="#f0f0f0" stroke-width="1" fill="none"/><path d="M90.4 266.7l2.4 2.6" stroke="#f0f0f0" stroke-width="1.3" stroke-linecap="round"/>
<path d="M93.2 270.1h1.3v-1.3z" fill="#cfcfcf"/>
<text x="86.6" y="214.6" font-size="8.2" fill="#f0f0f0" font-family="'Liberation Serif',serif">T</text>
<rect x="87" y="278" width="6.6" height="6.6" fill="#000"/>
<rect x="84" y="273.7" width="6.5" height="6.3" fill="#e00000"/>
<path d="M92.4 274.4l1.4 1.4M92.4 275.8l1.4-1.4" stroke="#fff" stroke-width=".6"/>
<rect x="86.3" y="288.3" width="6.8" height="4.8" fill="#eee"/>
<circle cx="89.7" cy="290.7" r="1.4" fill="#444"/>
<rect x="87.2" y="298.4" width="4.8" height="2.2" fill="none" stroke="#aaa" stroke-width=".5"/>
<rect x="82.2" y="106" width="1" height="6" fill="#dfefff"/>
<rect x="82.2" y="148" width="1" height="6" fill="#dfefff"/>
<rect x="82.2" y="195" width="1" height="6" fill="#dfefff"/>
<text x="84.5" y="342.2" font-size="3.4" fill="#cfc8cf" opacity="0.8" textLength="77" lengthAdjust="spacingAndGlyphs">securepubads.g.doubleclick.net を待機しています...</text>
<rect x="735.5" y="61.3" width="119" height="276" fill="#262626"/>
<rect x="844.6" y="61.3" width="10" height="283" fill="#474747"/>
<rect x="735.5" y="65.4" width="13.5" height="23.1" fill="#474747"/>
<rect x="735.5" y="90.8" width="13.5" height="11" fill="#474747"/>
<rect x="735.5" y="104" width="13.5" height="21.6" fill="#474747"/>
<rect x="735.5" y="127.8" width="13.5" height="24.5" fill="#474747"/>
<rect x="735.5" y="154.5" width="13.5" height="189.5" fill="#474747"/>
<g fill="#e0e0e0"><circle cx="738.8" cy="63.4" r=".5"/><circle cx="740.4" cy="63.4" r=".5"/><circle cx="796.8" cy="63.4" r=".5"/><circle cx="798.4" cy="63.4" r=".5"/></g>
<circle cx="742.2" cy="71.4" r="3.3" stroke="#e6e6e6" stroke-width=".8" fill="none"/><path d="M742.2 69.8v2.6" stroke="#e6e6e6" stroke-width=".8"/>
<path d="M739 80.2h6.6M739 82.3h6.6M739 84.4h6.6" stroke="#d8d8d8" stroke-width=".9"/>
<path d="M741.6 97.2l3.8-4" stroke="#f0f0f0" stroke-width="1.5" stroke-linecap="round"/><circle cx="740.6" cy="98.2" r="1.5" fill="#f0f0f0"/><circle cx="739.6" cy="93.4" r=".9" fill="#ddd"/>
<text x="738.6" y="114.5" font-size="8.5" fill="#e8e8e8" font-family="'Liberation Serif',serif">T</text>
<text x="743" y="114.8" font-size="4.5" fill="#e8e8e8" font-family="'Liberation Serif',serif">T</text>
<text x="738.5" y="124.5" font-size="8.5" fill="#f0f0f0" font-weight="bold">¶</text>
<text x="738" y="136.2" font-size="3.6" fill="#e8e8e8" font-weight="bold" textLength="8" lengthAdjust="spacingAndGlyphs">CSS</text>
<rect x="738.3" y="143.4" width="7.4" height="5.6" fill="#eee"/>
<path d="M738.3 148.6l2.5-2.6 1.7 1.5 1.7-1.9 1.5 3z" fill="#474747"/>
<rect x="750.3" y="74" width="94.3" height="54.5" fill="#474747"/>
<rect x="751.3" y="79.5" width="89" height="0.6" fill="#595959"/>
<rect x="751.3" y="89.7" width="89" height="0.6" fill="#595959"/>
<rect x="751.3" y="99.8" width="89" height="0.6" fill="#595959"/>
<rect x="751.3" y="109.7" width="89" height="0.6" fill="#595959"/>
<rect x="751.3" y="119.9" width="89" height="0.6" fill="#595959"/>
<rect x="750.3" y="120.5" width="91.5" height="8" fill="#333"/>
<rect x="841.8" y="120.5" width="2.6" height="8" fill="#111"/>
<text x="752.3" y="76.4" font-size="4.5" fill="#e4e4e4" opacity="0.9" textLength="17.5" lengthAdjust="spacingAndGlyphs">消しゴム</text>
<text x="752.3" y="86.8" font-size="4.5" fill="#e4e4e4" opacity="0.9" textLength="17.5" lengthAdjust="spacingAndGlyphs">選択解除</text>
<text x="752.3" y="97" font-size="4.5" fill="#e4e4e4" opacity="0.9" textLength="17.5" lengthAdjust="spacingAndGlyphs">消しゴム</text>
<text x="752.3" y="107.2" font-size="4.5" fill="#e4e4e4" opacity="0.9" textLength="17.5" lengthAdjust="spacingAndGlyphs">消しゴム</text>
<text x="752.3" y="117.2" font-size="4.5" fill="#e4e4e4" opacity="0.9" textLength="9" lengthAdjust="spacingAndGlyphs">移動</text>
<text x="752.3" y="126.6" font-size="4.5" fill="#e4e4e4" opacity="0.9" textLength="17.5" lengthAdjust="spacingAndGlyphs">自由変形</text>
<rect x="750.3" y="61.3" width="94.3" height="12.7" fill="#262626"/>
<rect x="750.3" y="65.6" width="14" height="8.6" fill="#474747"/>
<text x="752.6" y="71.8" font-size="4.5" fill="#f0f0f0" textLength="9" lengthAdjust="spacingAndGlyphs">履歴</text>
<text x="768.9" y="71.8" font-size="4.5" fill="#e0e0e0" textLength="8" lengthAdjust="spacingAndGlyphs">見本</text>
<rect x="837.4" y="65.7" width="7" height="7.5" fill="#4d4d4d"/>
<text x="839.3" y="71" font-size="4.5" fill="#999">»</text>
<rect x="750.3" y="128.5" width="94.3" height="10" fill="#262626"/>
<rect x="750.3" y="130.6" width="22" height="9" fill="#474747"/>
<text x="752.6" y="137.5" font-size="4.8" fill="#f0f0f0" textLength="18" lengthAdjust="spacingAndGlyphs">スタイル</text>
<rect x="750.3" y="139.5" width="94.3" height="50" fill="#474747"/>
<rect x="752.6" y="142" width="80.4" height="45" fill="#333"/>
<path d="M835.6 145.3h2.8l-1.4 2z" fill="#f0f0f0"/>
<rect x="750.3" y="189.5" width="94.3" height="10" fill="#262626"/>
<rect x="750.3" y="191.5" width="21.5" height="8.5" fill="#474747"/>
<text x="752.4" y="198" font-size="4.8" fill="#f0f0f0" textLength="17.5" lengthAdjust="spacingAndGlyphs">レイヤー</text>
<text x="777.6" y="198" font-size="4.8" fill="#e6e6e6" textLength="22.5" lengthAdjust="spacingAndGlyphs">チャンネル</text>
<text x="806" y="198" font-size="4.8" fill="#e6e6e6" textLength="9.6" lengthAdjust="spacingAndGlyphs">パス</text>
<rect x="837.4" y="192.6" width="7" height="7" fill="#4d4d4d"/>
<text x="839.3" y="197.8" font-size="4.5" fill="#999">»</text>
<rect x="750.3" y="199.8" width="94.3" height="144.2" fill="#474747"/>
<rect x="752.2" y="202.5" width="49" height="7.6" fill="#575757"/>
<text x="753.8" y="208.2" font-size="4.3" fill="#aaa" textLength="8.6" lengthAdjust="spacingAndGlyphs">通常</text>
<path d="M797 205.6l1.1 1.3 1.1-1.3" stroke="#aaa" stroke-width=".5" fill="none"/>
<text x="751.6" y="218.6" font-size="4.3" fill="#9a9a9a" textLength="17.5" lengthAdjust="spacingAndGlyphs">不透明度:</text>
<rect x="771" y="213.4" width="14" height="7.2" fill="#575757"/>
<text x="772.4" y="218.8" font-size="4" fill="#bbb" textLength="11" lengthAdjust="spacingAndGlyphs">100%</text>
<path d="M787.5 216h2.6l-1.3 1.8z" fill="#eee"/>
<text x="751.6" y="228" font-size="4.3" fill="#9a9a9a" textLength="36" lengthAdjust="spacingAndGlyphs">レイヤーをロック:</text>
<g stroke="#e6e6e6" stroke-width=".7" fill="none"><rect x="791.2" y="223.8" width="4.6" height="4.6" stroke-dasharray="1 .6"/><path d="M799.2 228.3l3.4-3.8" stroke-width="1.2"/><path d="M806.8 223.6v5.2M804.2 226.2h5.2"/></g><rect x="811.7" y="225.6" width="4.4" height="3.3" fill="#eee"/><path d="M812.6 225.6v-1a1.3 1.3 0 0 1 2.6 0v1" stroke="#eee" stroke-width=".7" fill="none"/>
<text x="751.6" y="237.3" font-size="4.3" fill="#9a9a9a" textLength="13.5" lengthAdjust="spacingAndGlyphs">フィル:</text>
<rect x="766.8" y="232.2" width="14" height="7.2" fill="#575757"/>
<text x="768.2" y="237.5" font-size="4" fill="#bbb" textLength="11" lengthAdjust="spacingAndGlyphs">100%</text>
<path d="M783 234.8h2.6l-1.3 1.8z" fill="#eee"/>
<path d="M752.4 245.2q2.5-2.6 5 0q-2.5 2.6-5 0z" fill="#e8e8e8"/><circle cx="754.9" cy="245.2" r=".6" fill="#474747"/>
<rect x="761.2" y="241.8" width="11.6" height="6.6" fill="#fff"/>
<rect x="763" y="243.7" width="5" height="2.6" fill="#e7d9a8"/>
<rect x="765.6" y="242.8" width="2.4" height="1.4" fill="#e89a30"/>
<rect x="751.3" y="249.7" width="89" height="0.5" fill="#565656"/>
<text x="777" y="247" font-size="4.5" fill="#eaeaea" textLength="2.2" lengthAdjust="spacingAndGlyphs">2</text>
<path d="M752.4 254.75q2.5-2.6 5 0q-2.5 2.6-5 0z" fill="#e8e8e8"/><circle cx="754.9" cy="254.75" r=".6" fill="#474747"/>
<rect x="761.2" y="251.35" width="11.6" height="6.6" fill="#fff"/>
<rect x="764.2" y="253.25" width="5" height="2.6" fill="#e7d9a8"/>
<rect x="765.6" y="252.75" width="2.4" height="1.4" fill="#c9a27a"/>
<rect x="751.3" y="259.25" width="89" height="0.5" fill="#565656"/>
<text x="777" y="256.55" font-size="4.5" fill="#eaeaea" textLength="2.2" lengthAdjust="spacingAndGlyphs">1</text>
<path d="M752.4 264.3q2.5-2.6 5 0q-2.5 2.6-5 0z" fill="#e8e8e8"/><circle cx="754.9" cy="264.3" r=".6" fill="#474747"/>
<rect x="761.2" y="260.9" width="11.6" height="6.6" fill="#fff"/>
<rect x="765.4" y="262.8" width="5" height="2.6" fill="#e7d9a8"/>
<rect x="765.6" y="262.7" width="2.4" height="1.4" fill="#c9a27a"/>
<rect x="751.3" y="268.8" width="89" height="0.5" fill="#565656"/>
<text x="777" y="266.1" font-size="4.5" fill="#eaeaea" textLength="2.2" lengthAdjust="spacingAndGlyphs">3</text>
<path d="M752.4 273.85q2.5-2.6 5 0q-2.5 2.6-5 0z" fill="#e8e8e8"/><circle cx="754.9" cy="273.85" r=".6" fill="#474747"/>
<rect x="761.2" y="270.45" width="11.6" height="6.6" fill="#fff"/>
<text x="777" y="275.65" font-size="4.5" fill="#eaeaea" textLength="25.5" lengthAdjust="spacingAndGlyphs">Background</text>
<rect x="836.3" y="273.3" width="4.2" height="3.2" fill="#cfcfcf"/><path d="M837.2 273.3v-1a1.2 1.2 0 0 1 2.4 0v1" stroke="#cfcfcf" stroke-width=".6" fill="none"/>
<rect x="850.6" y="225" width="3.2" height="78" fill="#a89c9c"/>
<rect x="850.6" y="286" width="4.2" height="22" fill="#111"/>
<path d="M853.9 293.2l-2.2 3 2.2 3" stroke="#fff" stroke-width=".9" fill="none"/>
<g fill="#eee"><rect x="782.2" y="337.3" width="5" height="2" rx="1"/><path d="M790.5 340.5l3.4-3.8" stroke="#ccc" stroke-width=".8"/><circle cx="794.3" cy="339.8" r="1.2" fill="#bbb"/><circle cx="803.2" cy="338.4" r="2.6"/><rect x="808.3" y="336" width="6" height="4.8" rx=".6"/><path d="M817.4 336.2h2l.8.8h3v3.8h-5.8z"/><rect x="826.6" y="336" width="4.8" height="5.2" rx="1.4" fill="none" stroke="#ccc" stroke-width=".7"/><path d="M835 336.4h5l-.7 4.8h-3.6z"/></g><path d="M803.2 335.8a2.6 2.6 0 0 0 0 5.2z" fill="#474747"/><circle cx="811.3" cy="338.4" r="1.3" fill="#474747"/>
<rect x="844.3" y="334" width="10.7" height="13" fill="#16262a"/>
<rect x="849" y="339" width="6" height="3.6" fill="#fff"/>
<rect x="79.4" y="360.8" width="773.6" height="325.2" fill="url(#gbot)"/>
<rect x="79.4" y="360.8" width="21" height="325.2" fill="#00a2ee"/>
<rect x="79.4" y="360.8" width="773.6" height="1.3" fill="url(#gtop2)"/>
<rect x="95.9" y="362.5" width="4.1" height="29" fill="#f4f6fa"/>
<rect x="95.9" y="391.5" width="4.1" height="75" fill="#1698de"/>
<rect x="96.4" y="408" width="3.6" height="6" fill="#0b3a6a"/>
<rect x="96.4" y="421" width="3.6" height="9" fill="#18b4cc"/>
<rect x="96.4" y="441" width="3.6" height="7" fill="#0a3060"/>
<rect x="96.4" y="455" width="3.6" height="5" fill="#0d4a8a"/>
<rect x="95.9" y="466.5" width="4.1" height="86" fill="#0c1a34"/>
<rect x="96.3" y="478" width="3.7" height="8" fill="#1a78c8"/>
<rect x="96.3" y="504" width="3.7" height="9" fill="#1268b8"/>
<rect x="96.2" y="530" width="3.8" height="10" fill="#e8e8e8"/>
<rect x="83.1" y="363.3" width="13.1" height="189" fill="#2c2c2c"/>
<rect x="83.5" y="363.6" width="12.3" height="188.4" fill="#4a4a4a"/>
<rect x="83.4" y="363.6" width="12.5" height="4.8" fill="#3a302c"/>
<path d="M86 366l1-.8M86 366l1 .8M87.3 366l1-.8M87.3 366l1 .8M92.2 365.2l1.4 1.6M93.6 365.2l-1.4 1.6" stroke="#9a9a9a" stroke-width=".5" fill="none"/>
<rect x="84.2" y="372.3" width="11" height="9.6" fill="#2e2e2e"/>
<path d="M89.7 374.4v5.2M87.1 377h5.2" stroke="#d0d0d0" stroke-width=".6"/><path d="M88.7 374.8l1-1.2 1 1.2zM88.7 379.2l1 1.2 1-1.2zM87.5 376l-1.2 1 1.2 1zM91.9 376l1.2 1-1.2 1z" fill="#d8d8d8"/>
<rect x="86.5" y="383.3" width="6.4" height="5.4" stroke="#bdbdbd" stroke-width=".7" stroke-dasharray="1.1 .8" fill="none"/>
<ellipse cx="89.7" cy="394.7" rx="3" ry="2" stroke="#e2e2e2" stroke-width=".8" fill="none" stroke-linecap="round"/><path d="M87.9 396.5l-.7 2" stroke="#e2e2e2" stroke-width=".8" fill="none" stroke-linecap="round"/>
<path d="M87.1 406.9l4.8-4.8" stroke="#e2e2e2" stroke-width="1.2" stroke-linecap="round"/><path d="M91.5 401.3l1.2-1.2" stroke="#fff" stroke-width=".6"/>
<path d="M89.1 413.7l2.2-3.6 2.4 1.2-2.4 3.4zM89.5 413.9l-1.4 3" stroke="#e2e2e2" stroke-width=".8" fill="#e2e2e2"/>
<path d="M86.9 425.4l4.6-4.6" stroke="#e2e2e2" stroke-width="1.1" stroke-linecap="round"/><circle cx="87.1" cy="425.2" r=".9" fill="#e2e2e2"/>
<circle cx="89.7" cy="428.8" r="1.4" fill="#e2e2e2"/><path d="M88.3 429.6h2.8v1.8h-2.8zM86.7 432.5h6v1.3h-6z" fill="#e2e2e2"/>
<rect x="87" y="437.9" width="5.4" height="3.2" rx=".8" transform="rotate(-40 89.7 439.5)" fill="#e2e2e2"/>
<path d="M87.1 450.2l4.6-4.2M87.3 446l2.4 1" stroke="#bdbdbd" stroke-width=".9" stroke-linecap="round" fill="none"/>
<path d="M88.5 466.9l3.8-3.8" stroke="#e2e2e2" stroke-width="1.3" stroke-linecap="round"/><circle cx="87.2" cy="468.2" r=".9" fill="#e2e2e2"/>
<path d="M87.9 471.9v5l1.3-1.2 .9 2 .8-.4-.9-2h1.7z" fill="#9a9a9a"/>
<path d="M87.2 485.9l5-5.4" stroke="#8c8c8c" stroke-width=".8" stroke-linecap="round"/>
<path d="M88.2 492.8c0-2.3.4-3.7 1.1-3.7s.7.9.7 1.8c0-1.5.3-2.4.9-2.4s.8.9.8 2.4c.1-1.1.4-1.8.9-1.8s.7 1.1.7 3c0 2.8-.9 4.2-2.8 4.2s-3.1-1.5-3.7-3.5c.5-.5.9-.4 1.2 0z" fill="#e2e2e2"/>
<circle cx="88.9" cy="500.2" r="1.9" stroke="#e2e2e2" stroke-width=".9" fill="none"/><path d="M90.4 501.7l2.2 2.4" stroke="#e2e2e2" stroke-width="1.2" stroke-linecap="round"/>
<circle cx="87.7" cy="509.4" r=".55" fill="#ccc"/><circle cx="89.7" cy="509.4" r=".55" fill="#ccc"/><circle cx="91.7" cy="509.4" r=".55" fill="#ccc"/>
<rect x="86.5" y="517.2" width="2.2" height="2.2" fill="#ddd"/><path d="M90.1 516.4q2.2 0 2.2 2.2" stroke="#ddd" stroke-width=".6" fill="none"/>
<text x="87.2" y="460" font-size="7.6" fill="#e6e6e6" font-family="'Liberation Sans',sans-serif">T</text>
<rect x="88.2" y="525.6" width="5.8" height="5.8" fill="#fff"/>
<rect x="85.4" y="522.6" width="5.8" height="5.8" fill="#b4eab0" stroke="#4a4a4a" stroke-width=".5"/>
<rect x="86.6" y="536.6" width="6.2" height="4.4" fill="none" stroke="#9a9a9a" stroke-width=".6" rx=".6"/>
<rect x="86.4" y="545" width="6" height="4.2" rx=".5" stroke="#bdbdbd" stroke-width=".7" fill="none"/><path d="M93.4 549.6h1.3v-1.3z" fill="#bbb"/>
<text x="89" y="559.3" font-size="3.6" fill="#23364a" textLength="7" lengthAdjust="spacingAndGlyphs">Wor</text>
<linearGradient id="it" x1="0" y1="0" x2="0" y2="1"><stop offset="0" stop-color="#f0508a"/><stop offset="1" stop-color="#a45af0"/></linearGradient><clipPath id="dk"><rect x="79.4" y="552" width="20.4" height="134"/></clipPath><g clip-path="url(#dk)"><circle cx="96.1" cy="584.8" r="11.6" fill="url(#it)"/><circle cx="96.1" cy="584.8" r="9.8" fill="#fff"/><path d="M96.2 578.6v8.6" stroke="#e0508c" stroke-width="1.3"/><ellipse cx="94.6" cy="587.6" rx="2.2" ry="1.6" fill="#6a6af4"/><path d="M96.2 578.4l5-1.4v2.2l-5 1.4z" fill="#ef4a7a"/><circle cx="97.3" cy="636.4" r="15.1" fill="#b9a79c"/><circle cx="97.3" cy="636.4" r="13.7" fill="#e6ddd6"/><circle cx="97.3" cy="636.4" r="12.6" fill="#b08c7a"/><circle cx="97.3" cy="636.4" r="11.6" fill="#1a9ad8"/><circle cx="97.3" cy="636.4" r="8.4" fill="none" stroke="#6cc8ee" stroke-width="1"/><circle cx="97.3" cy="636.4" r="5" fill="none" stroke="#6cc8ee" stroke-width=".9"/></g>
<rect x="82.1" y="594.6" width="5.2" height="4.9" fill="#fff" stroke="#9ab" stroke-width=".3"/>
<path d="M83.4 598.3l2.4-2.4M84.3 595.7h1.6v1.6" stroke="#1d3f9a" stroke-width=".8" fill="none"/>
<rect x="82.1" y="646.4" width="5.2" height="4.9" fill="#fff" stroke="#9ab" stroke-width=".3"/>
<path d="M83.4 650.1l2.4-2.4M84.3 647.5h1.6v1.6" stroke="#1d3f9a" stroke-width=".8" fill="none"/>
<text x="91.4" y="605.4" font-size="3.6" fill="#1e3348" textLength="7" lengthAdjust="spacingAndGlyphs">iTu</text>
<text x="87.6" y="656.6" font-size="3.6" fill="#1e3348" textLength="11" lengthAdjust="spacingAndGlyphs">CCle</text>
<rect x="99.9" y="362" width="753.1" height="319.5" fill="#282828"/>
<rect x="99.9" y="362" width="753.1" height="8.6" fill="#444444"/>
<rect x="99.9" y="370.6" width="753.1" height="12.8" fill="#505050"/>
<rect x="99.9" y="383.4" width="753.1" height="9.6" fill="#424242"/>
<rect x="99.9" y="385" width="72.4" height="8" fill="#4d4d4d"/>
<rect x="99.9" y="393" width="700.5" height="5.9" fill="#404040"/>
<rect x="99.9" y="393" width="5.9" height="271" fill="#404040"/>
<rect x="102.6" y="363.7" width="5" height="5" fill="#0b2f6e" rx=".9" stroke="#2f8ef0" stroke-width=".4"/>
<text x="103.2" y="367.7" font-size="3.3" fill="#58b0ff" font-weight="bold" textLength="3.8" lengthAdjust="spacingAndGlyphs">Ps</text>
<text x="112.9" y="368.2" font-size="4.4" fill="#dcdcdc" opacity="0.85" textLength="15.7" lengthAdjust="spacingAndGlyphs">ファイル(F)</text>
<text x="132.7" y="368.2" font-size="4.4" fill="#dcdcdc" opacity="0.85" textLength="12.3" lengthAdjust="spacingAndGlyphs">編集(E)</text>
<text x="149.1" y="368.2" font-size="4.4" fill="#dcdcdc" opacity="0.85" textLength="15" lengthAdjust="spacingAndGlyphs">イメージ(I)</text>
<text x="168.2" y="368.2" font-size="4.4" fill="#dcdcdc" opacity="0.85" textLength="16.4" lengthAdjust="spacingAndGlyphs">レイヤー(L)</text>
<text x="189" y="368.2" font-size="4.4" fill="#dcdcdc" opacity="0.85" textLength="12.7" lengthAdjust="spacingAndGlyphs">書式(Y)</text>
<text x="205.6" y="368.2" font-size="4.4" fill="#dcdcdc" opacity="0.85" textLength="21.4" lengthAdjust="spacingAndGlyphs">選択範囲(S)</text>
<text x="231.4" y="368.2" font-size="4.4" fill="#dcdcdc" opacity="0.85" textLength="18.5" lengthAdjust="spacingAndGlyphs">フィルター(T)</text>
<text x="253.9" y="368.2" font-size="4.4" fill="#dcdcdc" opacity="0.85" textLength="10.1" lengthAdjust="spacingAndGlyphs">3D(D)</text>
<text x="268.5" y="368.2" font-size="4.4" fill="#dcdcdc" opacity="0.85" textLength="12.8" lengthAdjust="spacingAndGlyphs">表示(V)</text>
<text x="285.8" y="368.2" font-size="4.4" fill="#dcdcdc" opacity="0.85" textLength="14.8" lengthAdjust="spacingAndGlyphs">プラグイン</text>
<text x="304.4" y="368.2" font-size="4.4" fill="#dcdcdc" opacity="0.85" textLength="20.7" lengthAdjust="spacingAndGlyphs">ウィンドウ(W)</text>
<text x="329.8" y="368.2" font-size="4.4" fill="#dcdcdc" opacity="0.85" textLength="15.1" lengthAdjust="spacingAndGlyphs">ヘルプ(H)</text>
<path d="M819.6 366h3" stroke="#c4c4c4" stroke-width=".7"/><rect x="829.4" y="364.2" width="2.8" height="2.8" stroke="#9a9a9a" stroke-width=".5" fill="none"/><path d="M842.4 364.4l2.4 2.4M844.8 364.4l-2.4 2.4" stroke="#bdbdbd" stroke-width=".6"/>
<path d="M107.3 377.5l2.8-2.6 2.8 2.6v3h-2v-1.9h-1.6v1.9h-2z" fill="#f2f2f2"/>
<path d="M124.2 374.8v5.2M121.6 377.4h5.2" stroke="#cfcfcf" stroke-width=".6"/><path d="M123.2 375.6l1-1.2 1 1.2zM123.2 379.2l1 1.2 1-1.2zM122.4 376.4l-1.2 1 1.2 1zM126 376.4l1.2 1-1.2 1z" fill="#d4d4d4"/>
<path d="M131 377l1 1.1 1-1.1" stroke="#999" stroke-width=".5" fill="none"/>
<circle cx="139.8" cy="377.4" r="2.3" fill="#f0f0f0"/><rect x="138.7" y="376.3" width="2.2" height="2.2" fill="#505050"/>
<text x="144.3" y="378.8" font-size="4.4" fill="#dcdcdc" opacity="0.85" textLength="16.4" lengthAdjust="spacingAndGlyphs">自動選択 :</text>
<rect x="169.3" y="374.4" width="21.5" height="6.4" fill="#3a3a3a" stroke="#5a5a5a" stroke-width=".4"/>
<text x="171.6" y="378.8" font-size="4.2" fill="#bdbdbd" textLength="13" lengthAdjust="spacingAndGlyphs">レイヤー</text>
<path d="M186.4 377l1 1.1 1-1.1" stroke="#999" stroke-width=".5" fill="none"/>
<circle cx="198.3" cy="377.4" r="2.3" fill="#f0f0f0"/><rect x="197.2" y="376.3" width="2.2" height="2.2" fill="#505050"/>
<text x="201.8" y="378.8" font-size="4.3" fill="#cfcfcf" opacity="0.8" textLength="45.8" lengthAdjust="spacingAndGlyphs">バウンディングボックスを表示</text>
<path d="M258.4 375.8h3.6M259 377.4h2.4M258.4 379h3.6" stroke="#c4c4c4" stroke-width=".6"/>
<path d="M267.8 375.8h3.6M268.4 377.4h2.4M267.8 379h3.6" stroke="#c4c4c4" stroke-width=".6"/>
<path d="M276.8 375.8h3.6M277.4 377.4h2.4M276.8 379h3.6" stroke="#c4c4c4" stroke-width=".6"/>
<path d="M288 375.8h3.6M288.6 377.4h2.4M288 379h3.6" stroke="#6e6e6e" stroke-width=".6"/>
<path d="M302.2 375.8h3.6M302.8 377.4h2.4M302.2 379h3.6" stroke="#c4c4c4" stroke-width=".6"/>
<path d="M311.6 375.8h3.6M312.2 377.4h2.4M311.6 379h3.6" stroke="#c4c4c4" stroke-width=".6"/>
<path d="M320.6 375.8h3.6M321.2 377.4h2.4M320.6 379h3.6" stroke="#c4c4c4" stroke-width=".6"/>
<path d="M332.3 375.8h3.6M332.9 377.4h2.4M332.3 379h3.6" stroke="#6e6e6e" stroke-width=".6"/>
<circle cx="346.6" cy="377.4" r=".5" fill="#ddd"/><circle cx="348.2" cy="377.4" r=".5" fill="#ddd"/><circle cx="349.8" cy="377.4" r=".5" fill="#ddd"/>
<text x="359.5" y="378.8" font-size="4.2" fill="#6a6a6a" textLength="14.5" lengthAdjust="spacingAndGlyphs">3Dモード:</text>
<circle cx="385.3" cy="377.4" r="1.7" stroke="#6c6c6c" stroke-width=".7" fill="none"/><path d="M385.3 375.4v4" stroke="#6c6c6c" stroke-width=".5"/>
<circle cx="393.6" cy="377.4" r="1.7" stroke="#6c6c6c" stroke-width=".7" fill="none"/><path d="M393.6 375.4v4" stroke="#6c6c6c" stroke-width=".5"/>
<circle cx="402.8" cy="377.4" r="1.7" stroke="#bdbdbd" stroke-width=".7" fill="none"/><path d="M402.8 375.4v4" stroke="#bdbdbd" stroke-width=".5"/>
<circle cx="411.6" cy="377.4" r="1.7" stroke="#bdbdbd" stroke-width=".7" fill="none"/><path d="M411.6 375.4v4" stroke="#bdbdbd" stroke-width=".5"/>
<circle cx="420.6" cy="377.4" r="1.7" stroke="#bdbdbd" stroke-width=".7" fill="none"/><path d="M420.6 375.4v4" stroke="#bdbdbd" stroke-width=".5"/>
<circle cx="811.5" cy="377" r="3" fill="#f2f2f2"/><path d="M811.5 375v3.6" stroke="#474747" stroke-width="1"/><circle cx="820.8" cy="376.8" r="1.7" stroke="#eee" stroke-width=".8" fill="none"/><path d="M822 378l1.6 1.6" stroke="#eee" stroke-width=".9"/><rect x="828" y="374.8" width="5.6" height="4.6" stroke="#eee" stroke-width=".8" fill="none"/><rect x="828" y="374.8" width="2.4" height="4.6" fill="#eee"/><path d="M836.6 377.2l.8.9.8-.900" stroke="#999" stroke-width=".4" fill="none"/><path d="M843.6 376.4v3.6h5.4v-3.6" stroke="#f2f2f2" stroke-width="1" fill="none"/><path d="M846.3 373.6v4M844.9 375l1.4-1.4 1.4 1.4" stroke="#f2f2f2" stroke-width=".8" fill="none"/>
<text x="104.7" y="390.7" font-size="4.2" fill="#e4e4e4" opacity="0.9" textLength="59.4" lengthAdjust="spacingAndGlyphs">名称未設定 1 @ 100% (RGB/8#) *</text>
<path d="M166.6 388l1.8 1.8M168.4 388l-1.8 1.8" stroke="#bbb" stroke-width=".5"/>
<path d="M113.62 393v5.9M124.94 393v5.9M136.26 393v5.9M147.58 393v5.9M158.9 393v5.9M170.22 393v5.9M181.54 393v5.9M192.86 393v5.9M204.18 393v5.9M215.5 393v5.9M226.82 393v5.9M238.14 393v5.9M249.46 393v5.9M260.78 393v5.9M272.1 393v5.9M283.42 393v5.9M294.74 393v5.9M306.06 393v5.9M317.38 393v5.9M328.7 393v5.9M340.02 393v5.9M351.34 393v5.9M362.66 393v5.9M373.98 393v5.9M385.3 393v5.9M396.62 393v5.9M407.94 393v5.9M419.26 393v5.9M430.58 393v5.9M441.9 393v5.9M453.22 393v5.9M464.54 393v5.9M475.86 393v5.9M487.18 393v5.9M498.5 393v5.9M509.82 393v5.9M521.14 393v5.9M532.46 393v5.9M543.78 393v5.9M555.1 393v5.9M566.42 393v5.9M577.74 393v5.9M589.06 393v5.9M600.38 393v5.9M611.7 393v5.9M623.02 393v5.9M634.34 393v5.9M645.66 393v5.9M656.98 393v5.9M668.3 393v5.9M679.62 393v5.9M690.94 393v5.9M702.26 393v5.9M713.58 393v5.9M724.9 393v5.9M736.22 393v5.9M747.54 393v5.9M758.86 393v5.9M770.18 393v5.9M781.5 393v5.9M792.82 393v5.9" stroke="#555" stroke-width=".4"/>
<text y="397.4" font-size="3.1" fill="#a4a4a4" opacity=".85"><tspan x="114.52">700</tspan><tspan x="125.84">650</tspan><tspan x="137.16">600</tspan><tspan x="148.48">550</tspan><tspan x="159.8">500</tspan><tspan x="171.12">450</tspan><tspan x="182.44">400</tspan><tspan x="193.76">350</tspan><tspan x="205.08">300</tspan><tspan x="216.4">250</tspan><tspan x="227.72">200</tspan><tspan x="239.04">150</tspan><tspan x="250.36">100</tspan><tspan x="261.68">50</tspan><tspan x="273">0</tspan><tspan x="284.32">50</tspan><tspan x="295.64">100</tspan><tspan x="306.96">150</tspan><tspan x="318.28">200</tspan><tspan x="329.6">250</tspan><tspan x="340.92">300</tspan><tspan x="352.24">350</tspan><tspan x="363.56">400</tspan><tspan x="374.88">450</tspan><tspan x="386.2">500</tspan><tspan x="397.52">550</tspan><tspan x="408.84">600</tspan><tspan x="420.16">650</tspan><tspan x="431.48">700</tspan><tspan x="442.8">750</tspan><tspan x="454.12">800</tspan><tspan x="465.44">850</tspan><tspan x="476.76">900</tspan><tspan x="488.08">950</tspan><tspan x="499.4">1000</tspan><tspan x="510.72">1050</tspan><tspan x="522.04">1100</tspan><tspan x="533.36">1150</tspan><tspan x="544.68">1200</tspan><tspan x="556">1250</tspan><tspan x="567.32">1300</tspan><tspan x="578.64">1350</tspan><tspan x="589.96">1400</tspan><tspan x="601.28">1450</tspan><tspan x="612.6">1500</tspan><tspan x="623.92">1550</tspan><tspan x="635.24">1600</tspan><tspan x="646.56">1650</tspan><tspan x="657.88">1700</tspan><tspan x="669.2">1750</tspan><tspan x="680.52">1800</tspan><tspan x="691.84">1850</tspan><tspan x="703.16">1900</tspan><tspan x="714.48">1950</tspan><tspan x="725.8">2000</tspan><tspan x="737.12">2050</tspan><tspan x="748.44">2100</tspan><tspan x="759.76">2150</tspan><tspan x="771.08">2200</tspan><tspan x="782.4">2250</tspan></text>
<path d="M100.9 406.66h4.9M103.3 412.32h2.5M100.9 417.98h4.9M103.3 423.64h2.5M100.9 429.3h4.9M103.3 434.96h2.5M100.9 440.62h4.9M103.3 446.28h2.5M100.9 451.94h4.9M103.3 457.6h2.5M100.9 463.26h4.9M103.3 468.92h2.5M100.9 474.58h4.9M103.3 480.24h2.5M100.9 485.9h4.9M103.3 491.56h2.5M100.9 497.22h4.9M103.3 502.88h2.5M100.9 508.54h4.9M103.3 514.2h2.5M100.9 519.86h4.9M103.3 525.52h2.5M100.9 531.18h4.9M103.3 536.84h2.5M100.9 542.5h4.9M103.3 548.16h2.5M100.9 553.82h4.9M103.3 559.48h2.5M100.9 565.14h4.9M103.3 570.8h2.5M100.9 576.46h4.9M103.3 582.12h2.5M100.9 587.78h4.9M103.3 593.44h2.5M100.9 599.1h4.9M103.3 604.76h2.5M100.9 610.42h4.9M103.3 616.08h2.5M100.9 621.74h4.9M103.3 627.4h2.5M100.9 633.06h4.9M103.3 638.72h2.5M100.9 644.38h4.9M103.3 650.04h2.5M100.9 655.7h4.9M103.3 661.36h2.5" stroke="#525252" stroke-width=".5"/>
<rect x="800.4" y="393" width="6.6" height="271" fill="#494949"/>
<rect x="800.4" y="383.4" width="6.6" height="9.6" fill="#424242"/>
<rect x="99.9" y="663.8" width="707" height="6" fill="#414141"/>
<rect x="102.6" y="664.2" width="14" height="5" fill="#363636"/>
<text x="104" y="668.4" font-size="3.7" fill="#e6e6e6" textLength="10" lengthAdjust="spacingAndGlyphs">100%</text>
<text x="124.9" y="668.4" font-size="3.5" fill="#d6d6d6" textLength="42.7" lengthAdjust="spacingAndGlyphs">1600 px x 900 px (72 ppi)</text>
<path d="M176.4 665.4l1.3 1.3-1.3 1.3" stroke="#bbb" stroke-width=".5" fill="none"/>
<rect x="99.9" y="669.6" width="707" height="11.9" fill="#474747"/>
<rect x="99.9" y="669.5" width="707" height="0.5" fill="#333"/>
<rect x="102" y="671" width="21.4" height="9.4" fill="#535353"/>
<text x="104" y="677.4" font-size="4" fill="#f0f0f0" textLength="16.6" lengthAdjust="spacingAndGlyphs">タイムライン</text>
<path d="M801.2 674.3h3M801.2 675.5h3M801.2 676.7h3" stroke="#bbb" stroke-width=".5"/>
<rect x="271.4" y="428.6" width="364" height="205.2" fill="#0c0c0c"/>
<rect x="272.1" y="429.3" width="362.2" height="203.5" fill="#fff"/>
<rect x="278.6" y="434.6" width="138.7" height="97.1" fill="#fff" stroke="#c6c6c6" stroke-width="1.3"/><rect x="422.8" y="434.6" width="139.1" height="97.1" fill="#fff" stroke="#c6c6c6" stroke-width="1.3"/>
<use href="#pairA" transform="translate(291.66 437.82) scale(1.146)"/>
<use href="#pairB" transform="translate(433.65 438) scale(1.15)"/>
<use href="#lower" transform="translate(73.8 353.1) scale(0.895)"/>
<rect x="807" y="383.4" width="46" height="298" fill="#474747"/>
<rect x="807" y="383.4" width="46" height="4.6" fill="#3f3f3f"/>
<rect x="819.4" y="383.4" width="1.4" height="298" fill="#383838"/>
<rect x="806.6" y="388" width="0.8" height="292" fill="#383838"/>
<path d="M812.8 385l.9.8-.9.8M814 385l.9.8-.9.8M847.8 385l.9.8-.9.8M849 385l.9.8-.9.8" stroke="#aaa" stroke-width=".4" fill="none"/>
<rect x="807.4" y="402.6" width="12" height="0.7" fill="#383838"/>
<rect x="807.4" y="425.6" width="12" height="0.7" fill="#383838"/>
<rect x="807.4" y="439.6" width="12" height="0.7" fill="#383838"/>
<rect x="807.4" y="462.3" width="12" height="0.7" fill="#383838"/>
<rect x="807.4" y="476.3" width="12" height="0.7" fill="#383838"/>
<rect x="807.4" y="491" width="12" height="0.7" fill="#383838"/>
<g fill="#ededed" stroke="none"><path d="M810.6 392.5h2.3v6.4h-2.3zM814.2 392.5l2.4 1.6-1 1.2 1.2.8-2.6 2.4z"/><path d="M811 412l4.8-5 .9.9-4.6 4.9zM810.2 406.4h2v.7h-2zM810.2 407.8h1.4v.6h-1.4z"/><path d="M810.4 416.4h6v.9h-6zM810.4 419.4h6v.9h-6zM814.4 415.4h1.4v2.8h-1.4zM814.4 418.4h1.4v2.8h-1.4z"/><circle cx="814.2" cy="430.8" r="1.5"/><path d="M811.4 435.6c.2-2.6 1.2-3.2 2.8-3.2s2.6.6 2.8 3.2zM810.4 428.4h1.6v2.4h-1.6z"/><path d="M810.4 449.3l2.7-6.4h.8l2.7 6.4h-1l-.7-1.8h-2.8l-.7 1.8z"/><path d="M812.8 453h3.8v.9h-.8v5.6h-.9v-5.6h-.8v5.6h-.9v-3.2c-1.6 0-2.4-.7-2.4-1.7s.9-1.6 2-1.6z"/><path d="M810.6 466.6l5.8 5.8-.7.7-5.8-5.8zM816.4 466.6l.7.7-5.8 5.8-.7-.7z"/><circle cx="811" cy="472.6" r="1"/><circle cx="816.4" cy="472.6" r="1"/><path d="M810.8 480.8h3.6l2 2v4.6h-5.6z"/></g><path d="M812 483.4h3.2v2.8h-3.2z" fill="#474747"/>
<rect x="820.8" y="388" width="32.2" height="14.6" fill="#474747"/>
<path d="M825.8 392.8h4M825.8 394.8h4M825.8 396.8h4M825.8 398.8h4" stroke="#cfcfcf" stroke-width=".8"/><path d="M827 392v7.6" stroke="#474747" stroke-width=".5"/>
<text x="834.6" y="397.6" font-size="4.2" fill="#e6e6e6" opacity="0.9" textLength="14.6" lengthAdjust="spacingAndGlyphs">プロパティ</text>
<rect x="820.8" y="402.6" width="32.2" height="0.7" fill="#3a3a3a"/>
<rect x="698.4" y="407.2" width="98.4" height="173.4" fill="#2a2a2a"/>
<rect x="699" y="407.8" width="97.2" height="172" fill="#4f4f4f"/>
<rect x="699" y="407.8" width="97.2" height="3.8" fill="#3a3a3a"/>
<path d="M786 409l.9.8-.9.8M787.2 409l.9.8-.9.8M792.4 408.9l1.5 1.6M793.9 408.9l-1.5 1.6" stroke="#bbb" stroke-width=".45" fill="none"/>
<rect x="699" y="411.6" width="97.2" height="10" fill="#464646"/>
<rect x="711.6" y="411.6" width="14.2" height="10.2" fill="#525252" stroke="#5e5e5e" stroke-width=".3"/>
<text x="702.6" y="418.3" font-size="3.8" fill="#7c7c7c" textLength="4.5" lengthAdjust="spacingAndGlyphs">3D</text>
<text x="713" y="418.4" font-size="4.2" fill="#f0f0f0" textLength="11.6" lengthAdjust="spacingAndGlyphs">レイヤー</text>
<text x="729" y="418.4" font-size="4.1" fill="#a8a8a8" textLength="15.5" lengthAdjust="spacingAndGlyphs">チャンネル</text>
<path d="M790.6 415.8h3.4M790.6 417h3.4M790.6 418.2h3.4" stroke="#c8c8c8" stroke-width=".55"/>
<rect x="699" y="432.7" width="97.2" height="0.6" fill="#404040"/>
<rect x="699" y="442.2" width="97.2" height="0.6" fill="#404040"/>
<rect x="699" y="451.8" width="97.2" height="0.6" fill="#404040"/>
<rect x="701.8" y="424.2" width="38" height="7" fill="#484848"/>
<circle cx="704.6" cy="427.4" r="1.1" stroke="#ddd" stroke-width=".5" fill="none"/><path d="M705.4 428.3l1 1" stroke="#ddd" stroke-width=".5"/>
<text x="707.4" y="429.4" font-size="4.1" fill="#e6e6e6" textLength="7.2" lengthAdjust="spacingAndGlyphs">種類</text>
<path d="M735.2 427l1 1.1 1-1.1" stroke="#999" stroke-width=".5" fill="none"/>
<rect x="747.4" y="425.4" width="4.2" height="4" rx=".6" fill="#e8e8e8"/><rect x="748.3" y="427.6" width="2.4" height="1" fill="#4f4f4f"/><circle cx="757.7" cy="427.5" r="2.1" fill="#e8e8e8"/><path d="M757.7 425.4a2.1 2.1 0 0 1 0 4.2z" fill="#4f4f4f" transform="rotate(40 757.7 427.5)"/>
<text x="763.6" y="429.5" font-size="5.2" fill="#ececec" font-weight="bold" font-family="'Liberation Serif',serif">T</text>
<rect x="771.8" y="425.5" width="4" height="4" stroke="#e8e8e8" stroke-width=".7" fill="none"/><path d="M780.4 425.4h2.4l1.2 1.2v3h-3.6z" fill="#e8e8e8"/><circle cx="783.8" cy="429" r="1.1" fill="#e8e8e8" stroke="#4b4b4b" stroke-width=".4"/><rect x="792.2" y="424.4" width="2.6" height="5.4" rx=".6" fill="#2c2c2c"/><rect x="792.6" y="424.6" width="1.8" height="2.2" fill="#f4f4f4"/>
<rect x="701.8" y="434.8" width="50" height="6.2" fill="#484848" stroke="#555" stroke-width=".3"/>
<text x="704.6" y="439.8" font-size="3.9" fill="#7a7a7a" textLength="7" lengthAdjust="spacingAndGlyphs">通常</text>
<text x="756.4" y="439.8" font-size="3.9" fill="#7a7a7a" textLength="15" lengthAdjust="spacingAndGlyphs">不透明度:</text>
<rect x="775.8" y="434.8" width="14.4" height="6.2" fill="#484848" stroke="#555" stroke-width=".3"/>
<text x="779.6" y="439.6" font-size="3.3" fill="#777" textLength="7.5" lengthAdjust="spacingAndGlyphs">100%</text>
<text x="701.8" y="449.3" font-size="3.9" fill="#6c6c6c" textLength="10" lengthAdjust="spacingAndGlyphs">ロック:</text>
<g stroke="#cfcfcf" stroke-width=".6" fill="none"><rect x="715.2" y="445.2" width="3.6" height="3.6" stroke-dasharray=".9 .5"/><path d="M723 449l3-3.6" stroke-width="1"/><path d="M731.5 444.8v4.6M729.2 447.1h4.6"/><rect x="737.2" y="445.6" width="3.4" height="3" /></g><rect x="745.3" y="446.6" width="3.4" height="2.6" fill="#cfcfcf"/><path d="M746 446.6v-.8a1 1 0 0 1 2 0v.8" stroke="#cfcfcf" stroke-width=".5" fill="none"/>
<text x="762.8" y="449.3" font-size="3.9" fill="#6c6c6c" textLength="8" lengthAdjust="spacingAndGlyphs">塗り:</text>
<rect x="775.8" y="444.2" width="14.4" height="6.2" fill="#484848" stroke="#555" stroke-width=".3"/>
<text x="779.6" y="449" font-size="3.3" fill="#777" textLength="7.5" lengthAdjust="spacingAndGlyphs">100%</text>
<rect x="790.6" y="452.4" width="5.6" height="116.6" fill="#464646"/>
<path d="M702.4 458q2-2.1 4 0q-2 2.1-4 0z" fill="#dcdcdc"/><circle cx="704.4" cy="458" r=".5" fill="#4f4f4f"/>
<rect x="710.7" y="454.7" width="11" height="6.6" fill="#fff"/>
<rect x="712" y="456.6" width="5" height="2.4" fill="#eadcae"/>
<rect x="715.4" y="455.7" width="2.2" height="1.4" fill="#c9b08a"/>
<rect x="699" y="462.6" width="91.6" height="0.5" fill="#424242"/>
<text x="725.5" y="459.6" font-size="4" fill="#e4e4e4" textLength="1.7" lengthAdjust="spacingAndGlyphs">3</text>
<path d="M702.4 467.4q2-2.1 4 0q-2 2.1-4 0z" fill="#dcdcdc"/><circle cx="704.4" cy="467.4" r=".5" fill="#4f4f4f"/>
<rect x="710.7" y="464.1" width="11" height="6.6" fill="#fff"/>
<rect x="712.8" y="466" width="5" height="2.4" fill="#eadcae"/>
<rect x="714.2" y="465.4" width="2.2" height="1.4" fill="#e8923a"/>
<rect x="699" y="472" width="91.6" height="0.5" fill="#424242"/>
<text x="725.5" y="469" font-size="4" fill="#e4e4e4" textLength="1.7" lengthAdjust="spacingAndGlyphs">2</text>
<path d="M702.4 476.8q2-2.1 4 0q-2 2.1-4 0z" fill="#dcdcdc"/><circle cx="704.4" cy="476.8" r=".5" fill="#4f4f4f"/>
<rect x="710.7" y="473.5" width="11" height="6.6" fill="#fff"/>
<rect x="713.6" y="475.4" width="5" height="2.4" fill="#eadcae"/>
<rect x="713" y="475.1" width="2.2" height="1.4" fill="#c9b08a"/>
<rect x="699" y="481.4" width="91.6" height="0.5" fill="#424242"/>
<text x="725.5" y="478.4" font-size="4" fill="#e4e4e4" textLength="1.7" lengthAdjust="spacingAndGlyphs">1</text>
<path d="M702.4 486.2q2-2.1 4 0q-2 2.1-4 0z" fill="#dcdcdc"/><circle cx="704.4" cy="486.2" r=".5" fill="#4f4f4f"/>
<rect x="710.7" y="482.9" width="11" height="6.6" fill="#fff"/>
<rect x="699" y="490.8" width="91.6" height="0.5" fill="#424242"/>
<text x="725.5" y="487.8" font-size="4" fill="#e4e4e4" textLength="7" lengthAdjust="spacingAndGlyphs">背景</text>
<rect x="781.4" y="485.2" width="3.4" height="2.6" fill="#bdbdbd"/><path d="M782.1 485.2v-.8a1 1 0 0 1 2 0v.8" stroke="#bdbdbd" stroke-width=".5" fill="none"/>
<rect x="699" y="568.6" width="97.2" height="0.6" fill="#3e3e3e"/>
<g fill="#dedede"><rect x="726.8" y="572.4" width="4.6" height="1.6" rx=".8" fill="#8a8a8a"/><path d="M737 575l1.6-3.8 1.6 3.8" stroke="#7c7c7c" stroke-width=".5" fill="none"/><rect x="745.2" y="571" width="4.8" height="4" rx=".4"/><circle cx="757.2" cy="573.2" r="2.1"/><path d="M763 571.2h2l.7.7h3v3.6h-5.7z"/><rect x="773.2" y="570.8" width="3.8" height="4.6" fill="#8a8a8a"/><path d="M782 571.4h4.2l-.5 4.2h-3.2z" fill="#8a8a8a"/></g><circle cx="747.6" cy="573" r="1.1" fill="#4f4f4f"/><path d="M757.2 571.1a2.1 2.1 0 0 1 0 4.2z" fill="#4f4f4f" transform="rotate(40 757.2 573.2)"/>
</g>
<text x="894.5" y="331.8" font-family="'Liberation Serif','DejaVu Serif',serif" font-style="italic" font-size="69" fill="#000" stroke="#000" stroke-width="1.1" stroke-linejoin="round" textLength="74" lengthAdjust="spacingAndGlyphs">PP</text>
<text x="886.5" y="672" font-family="'Liberation Serif','DejaVu Serif',serif" font-style="italic" font-size="67" fill="#000" stroke="#000" stroke-width="1.1" stroke-linejoin="round" textLength="67" lengthAdjust="spacingAndGlyphs">PS</text>
</svg>
</body></html>
